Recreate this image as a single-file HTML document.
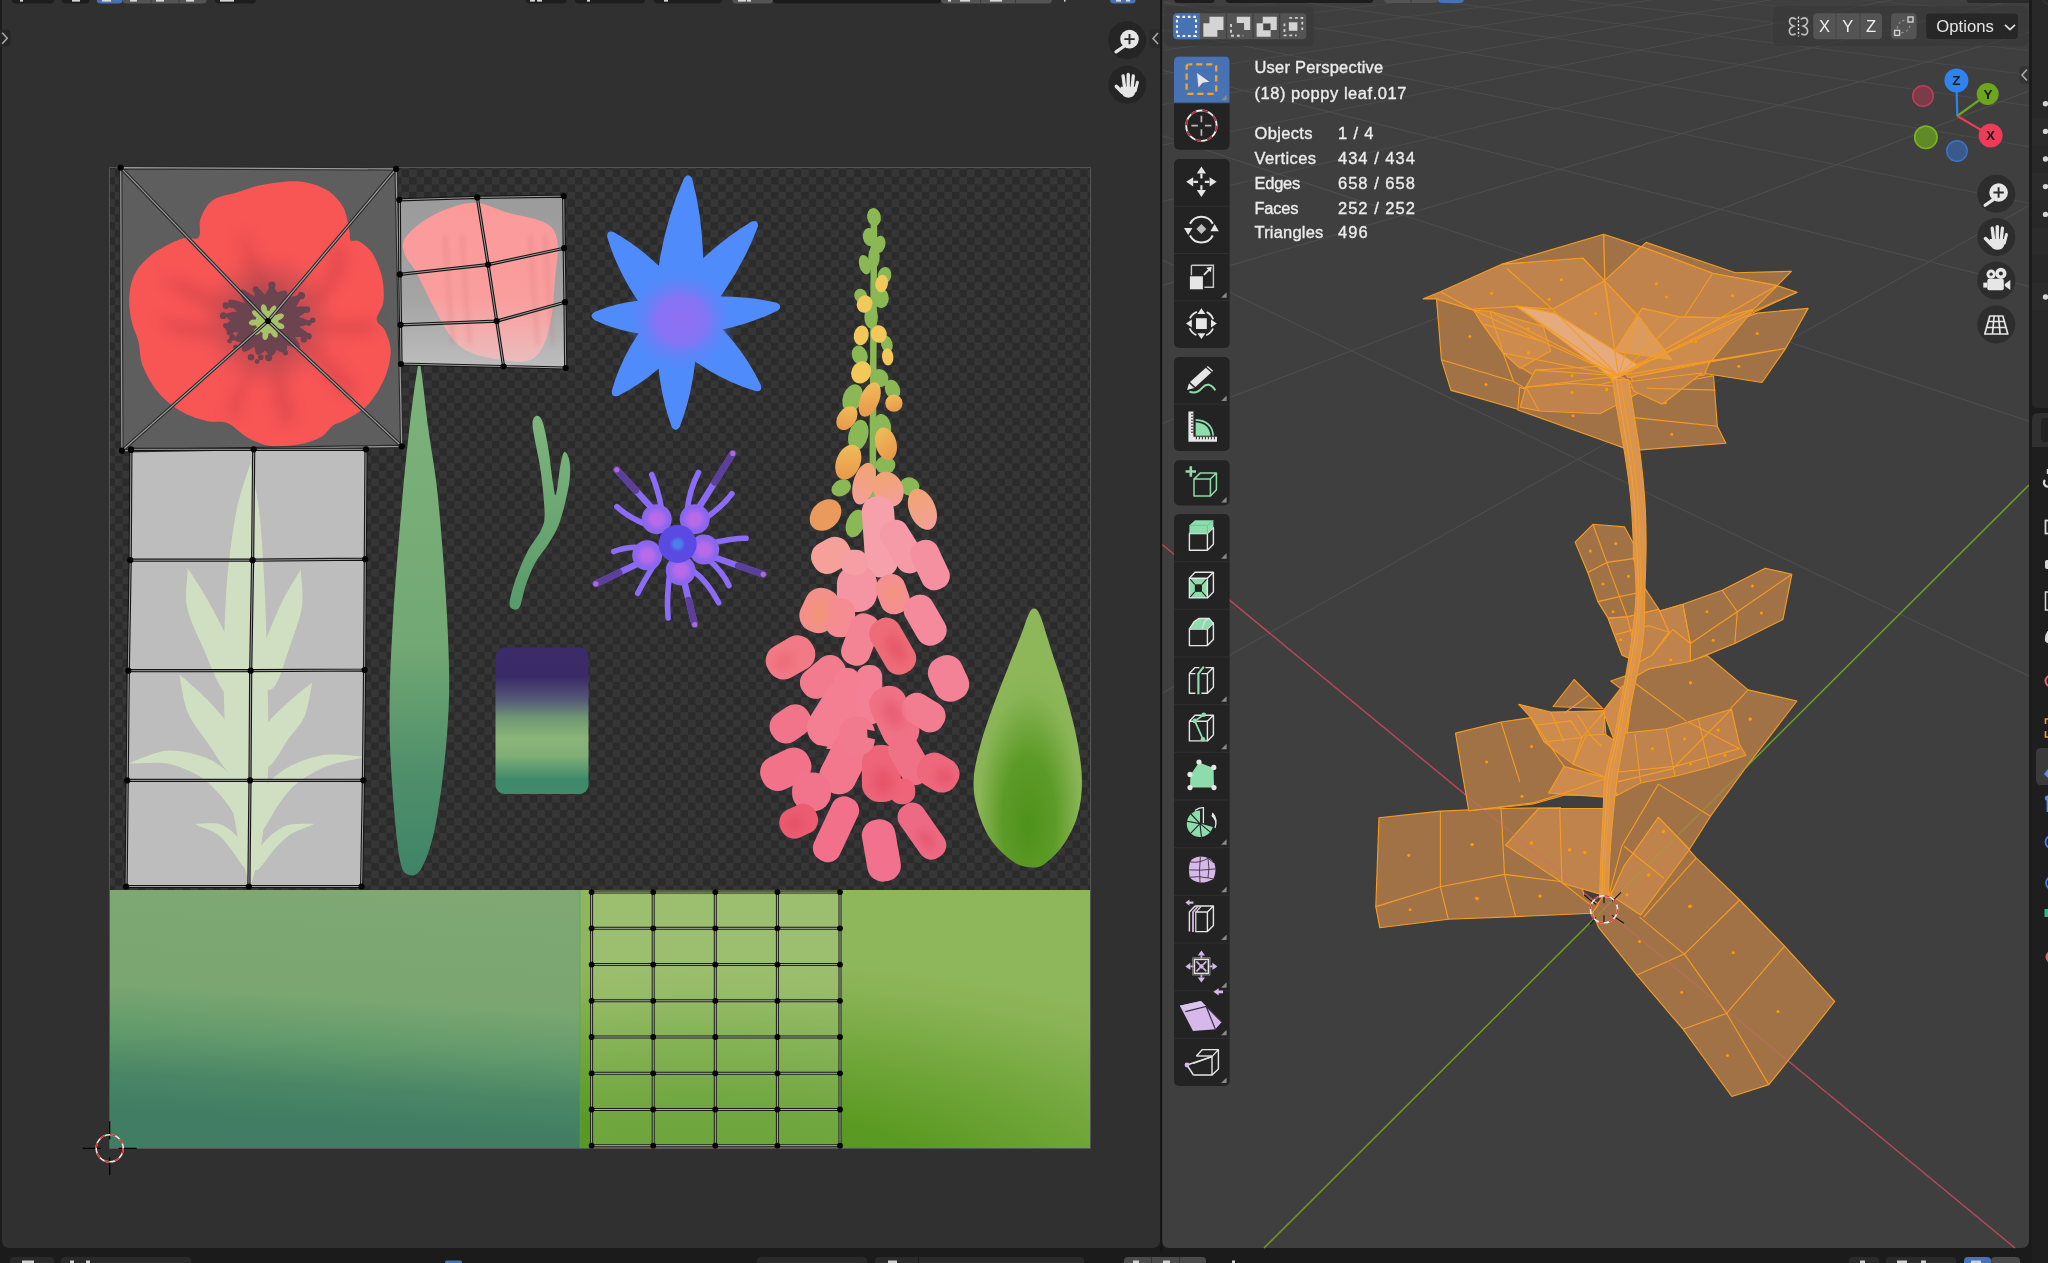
<!DOCTYPE html>
<html><head><meta charset="utf-8"><title>Blender</title>
<style>
html,body{margin:0;padding:0}
body{width:2048px;height:1263px;background:#1b1b1b;overflow:hidden;position:relative;font-family:"Liberation Sans",sans-serif;}
.abs{position:absolute}
#uvbg{left:1.5px;top:0;width:1158.5px;height:1248px;background:#303030;border-radius:0 0 7px 7px}
#vpbg{left:1162px;top:0;width:867px;height:1248px;background:#3f3f3f;border-radius:0 0 7px 7px}
svg{position:absolute;left:0;top:0}
</style></head><body>
<div id="uvbg" class="abs"></div>
<div id="vpbg" class="abs"></div>
<svg width="2048" height="1263" viewBox="0 0 2048 1263">
<defs>
<pattern id="chk" x="115" y="169.3" width="15.08" height="15.08" patternUnits="userSpaceOnUse">
<rect width="15.08" height="15.08" fill="#363636"/><rect width="7.54" height="7.54" fill="#2b2b2b"/><rect x="7.54" y="7.54" width="7.54" height="7.54" fill="#2b2b2b"/></pattern>
<linearGradient id="bandL" x1="0.56" y1="0" x2="0.44" y2="1">
<stop offset="0" stop-color="#7fa873"/><stop offset="0.42" stop-color="#7aa671"/><stop offset="0.6" stop-color="#629a6c"/><stop offset="0.76" stop-color="#4a8666"/><stop offset="0.9" stop-color="#417d63"/><stop offset="1" stop-color="#417d64"/></linearGradient>
<radialGradient id="bandR" gradientUnits="userSpaceOnUse" cx="700" cy="1205" r="670" gradientTransform="translate(0,1205) scale(1,0.367) translate(0,-1205)">
<stop offset="0" stop-color="#54951c"/><stop offset="0.4" stop-color="#5b9a22"/><stop offset="0.7" stop-color="#76a940"/><stop offset="0.92" stop-color="#8bb456"/><stop offset="1" stop-color="#8eb65a"/></radialGradient>
<linearGradient id="gridF" x1="0" y1="0" x2="0" y2="1">
<stop offset="0" stop-color="#9cbf6e"/><stop offset="0.5" stop-color="#8db465"/><stop offset="1" stop-color="#6fa055"/></linearGradient>
<linearGradient id="jar" x1="0" y1="0" x2="0" y2="1">
<stop offset="0" stop-color="#3b2b68"/><stop offset="0.2" stop-color="#3a2a68"/><stop offset="0.36" stop-color="#565a78"/><stop offset="0.48" stop-color="#6f9873"/><stop offset="0.62" stop-color="#8ab578"/><stop offset="0.74" stop-color="#7fae76"/><stop offset="0.9" stop-color="#3f8a6b"/><stop offset="1" stop-color="#418a6c"/></linearGradient>
<linearGradient id="longleaf" x1="0" y1="0" x2="0" y2="1">
<stop offset="0" stop-color="#7db27b"/><stop offset="0.55" stop-color="#72a873"/><stop offset="0.8" stop-color="#4f8f6a"/><stop offset="1" stop-color="#3f8468"/></linearGradient>
<linearGradient id="sprout" x1="0" y1="0" x2="0" y2="1">
<stop offset="0" stop-color="#80b57d"/><stop offset="1" stop-color="#589a6a"/></linearGradient>
<radialGradient id="drop" cx="0.52" cy="0.78" r="0.55" fx="0.5" fy="0.85">
<stop offset="0" stop-color="#4e921a"/><stop offset="0.45" stop-color="#5d9b28"/><stop offset="0.85" stop-color="#8ab556"/><stop offset="1" stop-color="#8db759"/></radialGradient>
<radialGradient id="blueC" cx="0.5" cy="0.5" r="0.5">
<stop offset="0" stop-color="#9070f2"/><stop offset="0.45" stop-color="#8474f4"/><stop offset="1" stop-color="#4f8bfb" stop-opacity="0"/></radialGradient>
<radialGradient id="popC" cx="0.5" cy="0.5" r="0.5">
<stop offset="0" stop-color="#8a4a55" stop-opacity="0.95"/><stop offset="0.35" stop-color="#a04550" stop-opacity="0.8"/><stop offset="0.7" stop-color="#c04a50" stop-opacity="0.45"/><stop offset="1" stop-color="#e05050" stop-opacity="0"/></radialGradient>
<filter id="b1"><feGaussianBlur stdDeviation="1"/></filter>
<filter id="b2"><feGaussianBlur stdDeviation="2.2"/></filter>
<filter id="b4"><feGaussianBlur stdDeviation="4"/></filter>
<filter id="b7"><feGaussianBlur stdDeviation="7"/></filter>
</defs>
<rect x="109.5" y="167.5" width="981" height="981" fill="none" stroke="#565656" stroke-width="1"/>
<rect x="110" y="168" width="980" height="722" fill="url(#chk)"/>
<rect x="110" y="890" width="470" height="258" fill="url(#bandL)"/>
<rect x="580" y="890" width="510" height="258" fill="url(#bandR)"/>
<rect x="579.5" y="890" width="1" height="258" fill="#4f9a8a" opacity="0.6"/>
<path d="M120.7,167.7 L396.1,168.9 L401.7,446.3 L121.9,450.7Z" fill="#5e5e5e"/>
<linearGradient id="petq" x1="0" y1="0" x2="0" y2="1"><stop offset="0" stop-color="#9b9b9b"/><stop offset="0.6" stop-color="#a4a4a4"/><stop offset="1" stop-color="#bdbdbd"/></linearGradient>
<path d="M399.3,199.8 L477.3,197.4 L563.7,196.1 L565.7,368 L503.6,366.5 L401,364Z" fill="url(#petq)"/>
<path d="M130.9,449.3 L366,449.3 L361.6,886.5 L126.1,886.5Z" fill="#bdbdbd"/>
<path d="M298.6,181.4 C309.2,182.1 318.2,185.1 325.6,189.3 C333.0,193.5 338.9,200.0 342.8,206.5 C346.7,213.0 347.7,222.9 349.0,228.5 C350.3,234.1 349.1,238.2 350.7,240.3 C352.3,242.4 355.2,239.2 358.8,241.3 C362.4,243.4 368.4,247.0 372.3,253.1 C376.2,259.1 380.3,269.4 382.1,277.6 C383.9,285.8 384.2,295.2 383.3,302.2 C382.4,309.2 376.4,314.7 376.7,319.4 C377.0,324.1 382.7,325.1 385.0,330.4 C387.3,335.7 390.8,343.3 390.7,351.3 C390.6,359.3 388.5,369.3 384.6,378.3 C380.7,387.3 373.9,398.4 367.4,405.3 C360.8,412.2 351.0,416.6 345.3,420.0 C339.6,423.4 337.1,422.5 333.0,425.4 C328.9,428.3 326.4,434.0 320.7,437.2 C315.0,440.4 307.2,443.2 298.6,444.6 C290.0,446.0 277.8,447.0 269.2,445.8 C260.6,444.6 254.0,441.0 247.1,437.2 C240.2,433.4 234.1,425.7 227.5,423.0 C220.9,420.3 215.2,422.9 207.8,421.2 C200.4,419.5 191.5,417.3 183.3,412.6 C175.1,407.9 165.4,400.8 158.7,393.0 C151.9,385.2 146.2,374.6 142.8,366.0 C139.4,357.4 140.2,348.9 138.4,341.5 C136.6,334.1 133.2,329.2 131.7,321.8 C130.2,314.4 128.7,305.5 129.3,297.3 C129.9,289.1 131.3,280.1 135.4,272.7 C139.5,265.3 146.2,258.7 153.8,253.1 C161.4,247.5 173.4,241.5 180.8,238.9 C188.2,236.3 195.2,240.8 198.5,237.4 C201.8,234.0 198.1,224.9 200.5,218.7 C202.9,212.5 206.6,204.7 212.7,200.3 C218.8,195.9 229.1,194.8 237.3,192.2 C245.5,189.6 251.6,186.7 261.8,184.9 C272.0,183.1 288.0,180.7 298.6,181.4Z" fill="#f85555"/>
<g filter="url(#b7)" opacity="0.4">
<path d="M242.2,231.0 C244.6,230.2 256.1,256.8 261.8,267.8 C267.5,278.9 275.7,290.8 276.5,297.3 C277.3,303.9 271.6,311.2 266.7,307.1 C261.8,303.0 251.2,285.4 247.1,272.7 C243.0,260.0 239.8,231.8 242.2,231.0Z" fill="#c03a42"/>
<path d="M337.9,243.3 C334.6,244.9 330.9,267.8 325.6,277.6 C320.3,287.4 307.2,297.3 306.0,302.2 C304.8,307.1 311.8,312.8 318.3,307.1 C324.9,301.4 342.0,278.4 345.3,267.8 C348.6,257.2 341.2,241.7 337.9,243.3Z" fill="#c03a42"/>
<path d="M163.6,277.6 C164.8,275.2 188.2,282.6 200.5,287.5 C212.8,292.4 232.8,302.2 237.3,307.1 C241.8,312.0 234.9,317.7 227.5,316.9 C220.1,316.1 203.8,308.8 193.1,302.2 C182.4,295.6 162.4,280.1 163.6,277.6Z" fill="#c03a42"/>
<path d="M158.7,319.4 C159.5,316.9 181.6,320.6 193.1,321.8 C204.6,323.0 222.6,324.2 227.5,326.7 C232.4,329.1 229.1,334.9 222.5,336.5 C215.9,338.1 198.8,339.4 188.2,336.5 C177.6,333.6 157.9,321.8 158.7,319.4Z" fill="#c03a42"/>
<path d="M276.5,351.3 C279.0,351.3 283.5,371.8 286.4,383.2 C289.3,394.6 294.5,413.9 293.7,420.0 C292.9,426.1 285.2,426.1 281.5,420.0 C277.8,413.9 272.4,394.6 271.6,383.2 C270.8,371.8 274.0,351.3 276.5,351.3Z" fill="#c03a42"/>
<path d="M261.8,353.7 C261.8,356.1 251.2,375.4 247.1,385.6 C243.0,395.8 240.6,411.0 237.3,415.1 C234.0,419.2 225.9,417.6 227.5,410.2 C229.1,402.8 241.4,380.3 247.1,370.9 C252.8,361.5 261.8,351.2 261.8,353.7Z" fill="#c03a42"/>
<path d="M298.6,341.5 C299.4,345.6 315.0,361.9 323.2,370.9 C331.4,379.9 342.4,393.1 347.7,395.5 C353.0,397.9 360.0,393.8 355.1,385.6 C350.2,377.4 327.7,353.8 318.3,346.4 C308.9,339.0 297.8,337.4 298.6,341.5Z" fill="#c03a42"/>
<path d="M310.9,321.8 C313.8,319.8 337.1,321.8 347.7,321.8 C358.3,321.8 370.6,320.2 374.7,321.8 C378.8,323.4 379.7,329.6 372.3,331.6 C364.9,333.7 340.7,335.7 330.5,334.1 C320.3,332.5 308.0,323.9 310.9,321.8Z" fill="#c03a42"/>
</g>
<circle cx="268" cy="321" r="72" fill="url(#popC)"/>
<path d="M306.4,322.0 C306.5,323.0 295.5,325.0 295.5,326.5 C295.5,328.1 307.0,334.2 306.5,335.1 C306.0,336.1 292.4,333.5 291.4,334.7 C290.3,336.0 298.4,344.9 297.8,345.9 C297.1,346.8 287.3,342.1 285.7,342.6 C284.1,343.2 285.2,349.9 284.1,350.5 C283.0,351.0 277.8,347.3 276.3,347.6 C274.8,348.0 272.6,353.4 271.3,353.5 C270.0,353.6 266.8,348.2 265.2,348.1 C263.7,348.0 259.2,353.2 258.1,352.7 C257.0,352.2 257.3,344.1 255.7,343.7 C254.1,343.4 245.7,349.9 244.3,349.6 C243.0,349.3 245.0,342.4 244.1,341.2 C243.2,339.9 237.1,340.2 236.8,339.0 C236.5,337.8 242.5,332.2 241.5,331.0 C240.4,329.8 228.4,329.7 227.6,328.6 C226.9,327.6 234.8,323.5 234.9,322.0 C234.9,320.5 227.4,316.5 228.1,315.4 C228.7,314.3 240.1,314.2 240.4,312.6 C240.7,311.0 229.7,302.4 230.5,301.6 C231.4,300.8 246.5,307.0 247.8,305.8 C249.2,304.7 241.2,292.5 242.1,291.8 C242.9,291.0 253.3,299.4 255.1,299.3 C257.0,299.1 256.7,291.0 257.9,290.8 C259.1,290.6 263.8,298.0 265.4,297.7 C267.0,297.4 270.2,288.8 271.5,288.4 C272.9,288.1 275.3,294.2 276.8,294.7 C278.4,295.2 283.4,292.0 284.6,292.7 C285.7,293.4 284.9,299.8 286.5,300.4 C288.2,301.0 297.7,296.7 298.4,297.6 C299.2,298.5 292.2,307.0 293.0,308.4 C293.9,309.7 305.4,308.1 305.6,309.2 C305.9,310.2 294.8,316.1 294.9,317.6 C295.0,319.1 306.4,321.0 306.4,322.0Z" fill="#6b4450" stroke="#6b4450" stroke-width="4.5" stroke-linejoin="round"/>
<g fill="#6b4450">
<circle cx="304.0" cy="334.5" r="3.3"/>
<circle cx="232.3" cy="337.4" r="3.1"/>
<circle cx="230.1" cy="332.1" r="3.5"/>
<circle cx="255.7" cy="289.4" r="3.1"/>
<circle cx="223.3" cy="315.7" r="3.4"/>
<circle cx="257.1" cy="361.5" r="2.4"/>
<circle cx="229.6" cy="341.1" r="2.4"/>
<circle cx="231.0" cy="324.3" r="3.3"/>
<circle cx="271.9" cy="285.0" r="3.6"/>
<circle cx="251.0" cy="357.2" r="3.2"/>
<circle cx="231.9" cy="304.6" r="3.5"/>
<circle cx="306.9" cy="309.6" r="3.3"/>
<circle cx="308.4" cy="336.2" r="3.2"/>
<circle cx="312.7" cy="320.3" r="2.7"/>
<circle cx="235.4" cy="347.0" r="2.2"/>
<circle cx="230.8" cy="330.0" r="2.4"/>
<circle cx="309.2" cy="336.1" r="2.4"/>
<circle cx="268.6" cy="357.6" r="3.6"/>
<circle cx="303.9" cy="339.5" r="3.1"/>
<circle cx="301.2" cy="295.7" r="3.6"/>
<circle cx="260.8" cy="357.3" r="2.8"/>
<circle cx="302.4" cy="295.1" r="2.4"/>
<circle cx="285.4" cy="352.7" r="2.6"/>
<circle cx="225.7" cy="325.5" r="2.6"/>
<circle cx="308.8" cy="322.9" r="2.8"/>
<circle cx="226.0" cy="305.6" r="3.3"/>
</g>
<g fill="#a9c268">
<circle cx="267" cy="322" r="11.5"/>
<ellipse cx="279.4" cy="325.8" rx="5.2" ry="3" transform="rotate(17 279.4 325.8)"/>
<ellipse cx="274.0" cy="332.9" rx="5.2" ry="3" transform="rotate(57 274.0 332.9)"/>
<ellipse cx="265.4" cy="334.9" rx="5.2" ry="3" transform="rotate(97 265.4 334.9)"/>
<ellipse cx="257.5" cy="330.8" rx="5.2" ry="3" transform="rotate(137 257.5 330.8)"/>
<ellipse cx="254.0" cy="322.6" rx="5.2" ry="3" transform="rotate(177 254.0 322.6)"/>
<ellipse cx="256.6" cy="314.1" rx="5.2" ry="3" transform="rotate(217 256.6 314.1)"/>
<ellipse cx="264.1" cy="309.3" rx="5.2" ry="3" transform="rotate(257 264.1 309.3)"/>
<ellipse cx="272.9" cy="310.4" rx="5.2" ry="3" transform="rotate(297 272.9 310.4)"/>
<ellipse cx="279.0" cy="317.0" rx="5.2" ry="3" transform="rotate(337 279.0 317.0)"/>
</g>
<linearGradient id="petg" x1="0" y1="0" x2="0" y2="1"><stop offset="0" stop-color="#fc9a9a"/><stop offset="0.6" stop-color="#fa9d9d"/><stop offset="0.85" stop-color="#f2b0b0"/><stop offset="1" stop-color="#e9bcbc"/></linearGradient>
<path d="M406.6,235.9 C411.5,229.6 422.6,220.5 433.6,215.0 C444.7,209.5 460.6,203.2 472.9,202.8 C485.2,202.4 495.0,209.1 507.3,212.6 C519.6,216.1 538.2,218.5 546.6,223.6 C555.0,228.7 556.2,234.3 557.6,243.3 C559.0,252.3 556.1,265.3 555.1,277.6 C554.1,289.9 553.5,305.4 551.5,316.9 C549.5,328.4 547.0,339.0 542.9,346.4 C538.8,353.8 535.3,359.1 526.9,361.1 C518.5,363.1 502.4,360.2 492.6,358.6 C482.8,357.0 475.0,355.0 468.0,351.3 C461.0,347.6 456.5,343.9 450.8,336.5 C445.1,329.1 439.3,317.7 433.6,307.1 C427.9,296.5 421.4,281.7 416.5,272.7 C411.6,263.7 405.8,259.2 404.2,253.1 C402.6,247.0 401.7,242.2 406.6,235.9Z" fill="url(#petg)"/>
<g filter="url(#b2)" opacity="0.35" stroke="#d07878" stroke-width="3" fill="none">
<path d="M445,235 Q448,290 453,345"/>
<path d="M462,235 Q465,290 470,345"/>
<path d="M530,235 Q533,290 538,345"/>
<path d="M545,235 Q548,290 553,345"/>
</g>
<path d="M249.9,464.8 C247.8,471.9 239.6,494.3 236.1,512.4 C232.7,530.6 228.5,560.8 226.7,585.5 C224.8,610.3 223.6,649.7 223.7,677.2 C223.8,704.6 225.2,744.0 227.4,768.6 C229.6,793.2 235.4,824.0 238.6,841.2 C241.9,858.3 247.3,876.6 249.2,882.8 C251.1,889.0 249.5,889.1 251.4,882.8 C253.3,876.5 259.4,858.0 262.0,840.6 C264.5,823.3 267.4,792.0 268.2,767.4 C269.0,742.8 268.0,703.8 267.5,676.6 C266.9,649.4 265.8,610.5 264.5,586.1 C263.3,561.6 261.5,531.5 259.5,513.4 C257.4,495.2 252.1,472.1 250.7,464.8 C249.2,457.5 252.1,457.6 249.9,464.8Z" fill="#d0dfc1"/>
<path d="M187.7,570.7 C187.4,576.3 184.8,596.0 187.2,607.8 C189.7,619.6 198.1,636.8 203.8,649.5 C209.4,662.3 218.7,687.6 225.1,692.7 C231.5,697.7 245.9,691.0 246.3,682.9 C246.7,674.8 233.4,651.1 227.6,638.7 C221.9,626.2 213.5,610.5 207.8,600.2 C202.0,589.9 192.1,574.7 189.1,570.3 C186.1,565.9 188.0,565.1 187.7,570.7Z" fill="#d0dfc1"/>
<path d="M299.5,571.7 C296.7,576.1 287.5,590.7 282.5,601.0 C277.4,611.2 270.4,627.9 266.0,639.9 C261.5,651.8 251.7,673.3 252.8,680.5 C253.9,687.7 267.9,692.7 273.4,687.9 C278.8,683.1 285.0,660.5 289.2,648.3 C293.5,636.2 300.2,618.5 301.9,607.0 C303.7,595.6 301.3,577.4 300.9,572.1 C300.5,566.8 302.3,567.4 299.5,571.7Z" fill="#d0dfc1"/>
<path d="M179.7,676.6 C180.7,682.1 183.5,702.4 187.8,712.4 C192.0,722.4 201.4,733.9 208.0,743.2 C214.5,752.5 225.1,771.7 231.5,774.5 C237.9,777.2 251.0,768.6 250.9,761.5 C250.8,754.4 237.2,736.5 230.6,727.2 C224.1,717.9 214.7,707.3 207.2,699.6 C199.8,691.9 185.1,679.3 180.9,675.8 C176.8,672.4 178.6,671.1 179.7,676.6Z" fill="#d0dfc1"/>
<path d="M310.6,683.8 C306.8,686.6 293.5,697.4 287.0,703.4 C280.4,709.4 272.5,716.1 266.9,723.9 C261.4,731.6 249.9,748.5 250.1,754.9 C250.4,761.3 263.0,768.9 268.7,766.5 C274.4,764.1 282.8,746.7 288.3,739.1 C293.7,731.6 301.3,724.2 304.8,716.0 C308.3,707.8 311.0,689.4 311.8,684.6 C312.7,679.7 314.3,681.0 310.6,683.8Z" fill="#d0dfc1"/>
<path d="M132.0,763.6 C137.4,763.8 157.6,761.7 167.8,763.6 C178.1,765.6 192.1,771.7 200.2,776.7 C208.3,781.7 215.7,790.1 222.1,797.2 C228.6,804.3 237.8,821.4 243.1,824.0 C248.4,826.5 258.2,820.2 257.5,814.0 C256.8,807.8 245.7,790.8 238.5,782.6 C231.2,774.4 219.9,764.1 209.4,759.3 C198.9,754.5 180.4,750.1 168.8,750.6 C157.1,751.0 137.3,760.2 131.8,762.2 C126.3,764.1 126.6,763.4 132.0,763.6Z" fill="#d0dfc1"/>
<path d="M361.4,756.4 C355.7,756.0 334.7,753.4 323.5,755.1 C312.4,756.8 296.4,762.4 287.2,767.7 C277.9,773.0 267.7,782.4 261.5,790.5 C255.4,798.7 246.3,816.0 246.4,822.0 C246.4,828.0 256.7,833.3 261.6,830.6 C266.5,827.8 273.7,810.8 279.1,803.7 C284.4,796.5 290.1,788.5 297.2,782.9 C304.4,777.3 316.8,770.1 326.5,766.3 C336.1,762.6 356.3,759.3 361.6,757.8 C366.8,756.3 367.1,756.8 361.4,756.4Z" fill="#d0dfc1"/>
<path d="M197.3,825.2 C200.2,826.7 211.9,830.2 216.9,833.7 C221.9,837.2 226.3,843.4 230.7,848.7 C235.0,854.0 242.5,867.0 246.1,869.2 C249.6,871.5 255.3,867.9 254.5,863.6 C253.7,859.2 245.7,846.1 240.7,840.3 C235.8,834.5 228.1,827.2 221.7,824.7 C215.2,822.2 201.3,823.7 197.7,823.8 C194.0,823.9 194.5,823.7 197.3,825.2Z" fill="#d0dfc1"/>
<path d="M311.0,823.8 C307.3,823.9 293.3,823.2 286.5,825.6 C279.7,828.1 271.3,834.6 265.8,840.2 C260.3,845.9 251.1,859.0 249.9,863.4 C248.8,867.7 254.4,871.6 258.1,869.4 C261.8,867.3 269.9,854.1 274.8,848.8 C279.7,843.5 285.2,837.7 290.7,834.2 C296.2,830.6 308.3,826.8 311.4,825.2 C314.4,823.7 314.8,823.7 311.0,823.8Z" fill="#d0dfc1"/>
<path d="M420.4,366.0 C422.4,375.3 425.8,410.0 428.5,430.0 C431.2,450.0 434.2,464.1 436.7,485.8 C439.2,507.5 441.5,535.4 443.4,560.2 C445.3,585.0 447.0,611.7 447.9,634.6 C448.8,657.5 449.6,676.2 449.0,697.9 C448.4,719.6 446.7,742.5 444.2,764.8 C441.7,787.1 438.0,814.4 434.1,831.8 C430.2,849.2 425.4,861.9 421.1,869.0 C416.8,876.1 411.7,876.5 408.1,874.6 C404.5,872.7 402.2,873.0 399.5,857.8 C396.8,842.6 393.8,808.2 392.1,783.4 C390.4,758.6 389.3,736.9 389.5,709.0 C389.7,681.1 391.1,650.1 393.2,616.0 C395.2,581.9 399.1,535.4 401.8,504.4 C404.5,473.4 406.7,451.7 409.2,430.0 C411.7,408.3 414.7,384.9 416.6,374.2 C418.5,363.5 418.4,356.7 420.4,366.0Z" fill="url(#longleaf)"/>
<rect x="495.5" y="647.5" width="93" height="146.5" rx="9" fill="url(#jar)"/>
<path d="M537.0,415.8 C538.7,415.8 540.8,416.8 542.7,422.3 C544.6,427.8 546.7,438.8 548.4,448.9 C550.1,459.0 551.7,475.5 553.0,483.1 C554.3,490.7 554.7,497.7 556.0,494.5 C557.3,491.3 559.2,471.2 560.6,464.1 C562.0,457.0 563.0,452.5 564.4,451.9 C565.8,451.3 568.4,455.7 569.3,460.3 C570.2,464.9 570.5,471.7 569.7,479.3 C568.9,486.9 566.4,498.0 564.4,505.9 C562.4,513.8 560.6,520.5 557.9,526.8 C555.2,533.1 552.2,537.9 548.4,543.9 C544.6,549.9 538.9,555.9 535.1,562.9 C531.3,569.9 528.1,578.4 525.6,585.7 C523.1,593.0 521.9,602.7 519.9,606.6 C517.9,610.5 515.1,609.9 513.4,609.3 C511.7,608.7 509.2,608.0 509.6,602.8 C510.1,597.6 513.1,586.6 516.1,578.1 C519.1,569.6 523.4,559.4 527.5,551.5 C531.6,543.6 537.9,536.9 540.8,530.6 C543.6,524.3 544.6,523.3 544.6,513.5 C544.6,503.7 542.4,483.7 540.8,471.7 C539.2,459.7 536.5,449.5 535.1,441.3 C533.7,433.1 532.2,426.6 532.5,422.3 C532.8,418.1 535.3,415.8 537.0,415.8Z" fill="url(#sprout)"/>
<path d="M700.3,319.8 Q709.1,241.5 692.1,178.5 Q688.5,172.2 684.1,177.9 Q657.3,237.4 653.7,316.2Z M693.0,331.2 Q738.6,279.6 757.9,226.5 Q758.6,219.3 751.7,221.4 Q703.1,250.3 661.0,304.8Z M679.0,335.9 Q736.1,331.4 777.8,310.6 Q783.3,306.0 776.9,302.7 Q731.6,291.7 675.0,300.1Z M662.3,335.0 Q706.6,376.5 755.6,391.1 Q762.8,392.0 760.8,385.0 Q739.3,338.7 691.7,301.0Z M657.2,317.8 Q654.3,379.3 671.7,426.9 Q675.7,432.9 679.7,426.9 Q698.3,379.8 696.8,318.2Z M661.0,304.8 Q624.0,346.1 611.8,390.8 Q611.1,398.0 618.0,395.9 Q659.6,375.4 693.0,331.2Z M677.5,300.0 Q630.4,296.8 594.5,311.9 Q588.4,315.7 594.3,319.9 Q629.4,336.8 676.5,336.0Z M693.2,305.1 Q657.3,256.5 613.5,232.0 Q606.6,229.9 607.2,237.0 Q621.4,285.2 660.8,330.9Z " fill="#508bfb"/>
<circle cx="677" cy="318" r="37" fill="#508bfb"/>
<ellipse cx="681" cy="320" rx="56" ry="52" fill="url(#blueC)"/>
<g stroke-linecap="round" fill="none">
<path d="M692.8,517.3 L732.8,453.4" stroke="#8a6af5" stroke-width="6.5"/>
<path d="M714.8,482.2 L732.8,453.4" stroke="#5b3f9a" stroke-width="7"/>
<circle cx="732.8" cy="453.4" r="2.6" fill="#b06ad8" stroke="none"/>
<path d="M658.6,515.4 L616.8,469.8" stroke="#8a6af5" stroke-width="6.5"/>
<path d="M635.6,490.3 L616.8,469.8" stroke="#5b3f9a" stroke-width="7"/>
<circle cx="616.8" cy="469.8" r="2.6" fill="#b06ad8" stroke="none"/>
<path d="M708.1,555.3 L763.2,574.3" stroke="#8a6af5" stroke-width="6.5"/>
<path d="M738.4,565.8 L763.2,574.3" stroke="#5b3f9a" stroke-width="7"/>
<circle cx="763.2" cy="574.3" r="2.6" fill="#b06ad8" stroke="none"/>
<path d="M647.2,559.1 L595.9,583.8" stroke="#8a6af5" stroke-width="6.5"/>
<path d="M619.0,572.7 L595.9,583.8" stroke="#5b3f9a" stroke-width="7"/>
<circle cx="595.9" cy="583.8" r="2.6" fill="#b06ad8" stroke="none"/>
<path d="M681.4,570.5 L694.7,624.5" stroke="#8a6af5" stroke-width="6.5"/>
<path d="M688.7,600.2 L694.7,624.5" stroke="#5b3f9a" stroke-width="7"/>
<circle cx="694.7" cy="624.5" r="2.6" fill="#b06ad8" stroke="none"/>
<path d="M662.4,513.5 Q658.6,490.7 651.8,474.7" stroke="#8b6cf6" stroke-width="5.6"/>
<path d="M687.1,511.6 Q689.0,490.7 698.5,472.4" stroke="#8b6cf6" stroke-width="5.6"/>
<path d="M704.2,519.2 Q723.3,505.9 732.0,493.7" stroke="#8b6cf6" stroke-width="5.6"/>
<path d="M647.2,524.9 Q628.2,517.3 616.8,506.6" stroke="#8b6cf6" stroke-width="5.6"/>
<path d="M708.1,543.9 Q730.9,538.2 746.1,538.2" stroke="#8b6cf6" stroke-width="5.6"/>
<path d="M708.1,559.1 Q723.3,572.4 729.0,585.7" stroke="#8b6cf6" stroke-width="5.6"/>
<path d="M647.2,547.7 Q628.2,545.8 613.8,551.5" stroke="#8b6cf6" stroke-width="5.6"/>
<path d="M652.9,566.7 Q643.4,581.9 637.7,593.3" stroke="#8b6cf6" stroke-width="5.6"/>
<path d="M670.0,572.4 Q666.2,597.1 668.1,618.0" stroke="#8b6cf6" stroke-width="5.6"/>
<path d="M692.8,570.5 Q708.1,581.9 718.7,602.8" stroke="#8b6cf6" stroke-width="5.6"/>
</g>
<circle cx="656.7" cy="519.2" r="15" fill="#8a66ee"/>
<circle cx="656.7" cy="519.2" r="9" fill="#b86ae8" filter="url(#b2)"/>
<circle cx="694.7" cy="519.2" r="15" fill="#8a66ee"/>
<circle cx="694.7" cy="519.2" r="9" fill="#b86ae8" filter="url(#b2)"/>
<circle cx="704.2" cy="549.6" r="15" fill="#8a66ee"/>
<circle cx="704.2" cy="549.6" r="9" fill="#b86ae8" filter="url(#b2)"/>
<circle cx="647.2" cy="555.3" r="15" fill="#8a66ee"/>
<circle cx="647.2" cy="555.3" r="9" fill="#b86ae8" filter="url(#b2)"/>
<circle cx="680.7" cy="570.5" r="15" fill="#8a66ee"/>
<circle cx="680.7" cy="570.5" r="9" fill="#b86ae8" filter="url(#b2)"/>
<circle cx="677.6" cy="543.9" r="19" fill="#5a4ae2"/>
<circle cx="677.6" cy="543.9" r="6" fill="#4a7fe8" filter="url(#b1)"/>
<path d="M874.0,218.5 L872.6,503.6" stroke="#8ab855" stroke-width="6.5" stroke-linecap="round"/>
<ellipse cx="874.0" cy="217.1" rx="6.8" ry="9.1" fill="#8ab855" transform="rotate(-10 874.0 217.1)" />
<ellipse cx="869.7" cy="237.0" rx="6.8" ry="9.1" fill="#8ab855" transform="rotate(-10 869.7 237.0)" />
<ellipse cx="879.7" cy="244.2" rx="5.7" ry="8.6" fill="#8ab855" transform="rotate(10 879.7 244.2)" />
<ellipse cx="874.0" cy="257.0" rx="5.7" ry="11.4" fill="#8ab855" transform="rotate(0 874.0 257.0)" />
<ellipse cx="864.9" cy="264.7" rx="5.7" ry="10.0" fill="#8ab855" transform="rotate(-15 864.9 264.7)" />
<ellipse cx="884.5" cy="275.5" rx="6.8" ry="8.6" fill="#8ab855" transform="rotate(10 884.5 275.5)" />
<ellipse cx="860.6" cy="295.5" rx="6.3" ry="6.8" fill="#8ab855" transform="rotate(-30 860.6 295.5)" />
<ellipse cx="881.1" cy="298.3" rx="7.7" ry="10.0" fill="#8ab855" transform="rotate(0 881.1 298.3)" />
<ellipse cx="871.1" cy="316.9" rx="6.8" ry="11.4" fill="#8ab855" transform="rotate(0 871.1 316.9)" />
<ellipse cx="859.7" cy="355.3" rx="7.7" ry="10.0" fill="#8ab855" transform="rotate(-20 859.7 355.3)" />
<ellipse cx="886.8" cy="343.9" rx="5.7" ry="8.6" fill="#8ab855" transform="rotate(-15 886.8 343.9)" />
<ellipse cx="879.7" cy="378.1" rx="8.6" ry="9.1" fill="#8ab855" transform="rotate(-30 879.7 378.1)" />
<ellipse cx="892.5" cy="389.5" rx="7.4" ry="10.0" fill="#8ab855" transform="rotate(-20 892.5 389.5)" />
<ellipse cx="852.6" cy="398.1" rx="9.7" ry="14.3" fill="#8ab855" transform="rotate(20 852.6 398.1)" />
<ellipse cx="882.5" cy="426.6" rx="8.6" ry="12.8" fill="#8ab855" transform="rotate(-10 882.5 426.6)" />
<ellipse cx="858.3" cy="435.2" rx="9.7" ry="15.7" fill="#8ab855" transform="rotate(15 858.3 435.2)" />
<ellipse cx="885.4" cy="465.1" rx="10.0" ry="9.1" fill="#8ab855" transform="rotate(0 885.4 465.1)" />
<ellipse cx="841.2" cy="487.9" rx="10.3" ry="8.0" fill="#8ab855" transform="rotate(-30 841.2 487.9)" />
<ellipse cx="909.6" cy="486.5" rx="10.0" ry="9.1" fill="#8ab855" transform="rotate(20 909.6 486.5)" />
<ellipse cx="855.5" cy="523.5" rx="9.1" ry="14.3" fill="#8ab855" transform="rotate(20 855.5 523.5)" />
<ellipse cx="881.7" cy="283.5" rx="6.3" ry="8.8" fill="#f2c85b" transform="rotate(10 881.7 283.5)" />
<ellipse cx="864.6" cy="304.0" rx="7.7" ry="8.8" fill="#f2c85b" transform="rotate(20 864.6 304.0)" />
<ellipse cx="861.2" cy="335.4" rx="7.4" ry="10.0" fill="#f2c85b" transform="rotate(10 861.2 335.4)" />
<ellipse cx="878.8" cy="334.0" rx="8.0" ry="8.8" fill="#f2c85b" transform="rotate(-10 878.8 334.0)" />
<ellipse cx="887.7" cy="356.8" rx="5.7" ry="8.6" fill="#f2c85b" transform="rotate(-5 887.7 356.8)" />
<ellipse cx="861.2" cy="372.4" rx="9.7" ry="11.4" fill="#f2c85b" transform="rotate(25 861.2 372.4)" />
<linearGradient id="og" x1="0" y1="0" x2="0.3" y2="1"><stop offset="0" stop-color="#f0c05c"/><stop offset="1" stop-color="#e99a4c"/></linearGradient>
<ellipse cx="869.7" cy="399.5" rx="9.4" ry="18.2" fill="url(#og)" transform="rotate(22 869.7 399.5)" />
<ellipse cx="846.9" cy="418.1" rx="9.1" ry="13.1" fill="url(#og)" transform="rotate(35 846.9 418.1)" />
<ellipse cx="893.9" cy="403.2" rx="8.6" ry="8.6" fill="url(#og)" transform="rotate(0 893.9 403.2)" />
<ellipse cx="886.0" cy="443.7" rx="10.5" ry="16.5" fill="url(#og)" transform="rotate(-15 886.0 443.7)" />
<ellipse cx="848.3" cy="462.2" rx="12.0" ry="18.2" fill="url(#og)" transform="rotate(22 848.3 462.2)" />
<ellipse cx="825.5" cy="515.0" rx="13.7" ry="17.7" fill="#ea9a5c" transform="rotate(45 825.5 515.0)" />
<linearGradient id="pg" x1="0" y1="0" x2="0" y2="1"><stop offset="0" stop-color="#f0a472"/><stop offset="1" stop-color="#f4a096"/></linearGradient>
<ellipse cx="864.0" cy="483.6" rx="10.8" ry="21.4" fill="url(#pg)" transform="rotate(15 864.0 483.6)" />
<ellipse cx="888.2" cy="489.3" rx="14.8" ry="18.2" fill="url(#pg)" transform="rotate(-25 888.2 489.3)" />
<ellipse cx="922.4" cy="509.3" rx="13.1" ry="21.4" fill="url(#pg)" transform="rotate(-22 922.4 509.3)" />
<ellipse cx="879.7" cy="520.7" rx="11.4" ry="20.0" fill="#f6a3ac" transform="rotate(0 879.7 520.7)" />
<rect x="863.5" y="496.3" width="32.4" height="81.1" rx="14.9" fill="#f5a0aa" transform="rotate(-4 879.7 536.8)"/>
<rect x="811.0" y="539.1" width="40.2" height="32.4" rx="14.9" fill="#f5a098" transform="rotate(-30 831.1 555.3)"/>
<rect x="887.8" y="518.0" width="29.2" height="57.1" rx="13.4" fill="#f59aa6" transform="rotate(-32 902.4 546.5)"/>
<rect x="915.4" y="539.1" width="29.2" height="51.9" rx="13.4" fill="#f590a0" transform="rotate(-25 930.0 565.0)"/>
<rect x="836.9" y="565.3" width="40.2" height="46.7" rx="18.5" fill="#f594a2" transform="rotate(0 857.0 588.7)"/>
<rect x="877.8" y="574.1" width="29.8" height="40.2" rx="13.7" fill="#f59090" transform="rotate(-20 892.7 594.2)"/>
<rect x="801.9" y="587.7" width="35.7" height="45.4" rx="16.4" fill="#f4908a" transform="rotate(25 819.7 610.4)"/>
<rect x="825.3" y="598.4" width="29.8" height="38.9" rx="13.7" fill="#f58c92" transform="rotate(0 840.2 617.9)"/>
<rect x="909.6" y="593.5" width="31.1" height="53.2" rx="14.3" fill="#f58a9c" transform="rotate(-30 925.2 620.1)"/>
<rect x="765.2" y="639.6" width="50.6" height="35.7" rx="16.4" fill="#f27a86" transform="rotate(-30 790.5 657.4)"/>
<rect x="798.3" y="661.3" width="49.3" height="31.1" rx="14.3" fill="#f27c8e" transform="rotate(-40 823.0 676.9)"/>
<rect x="845.4" y="613.0" width="29.8" height="53.2" rx="13.7" fill="#f28494" transform="rotate(20 860.3 639.6)"/>
<rect x="876.5" y="616.3" width="32.4" height="59.7" rx="14.9" fill="#ee6c78" transform="rotate(-30 892.7 646.1)"/>
<rect x="930.7" y="655.1" width="35.7" height="46.7" rx="16.4" fill="#f38296" transform="rotate(-25 948.5 678.5)"/>
<rect x="769.1" y="707.7" width="42.8" height="32.4" rx="14.9" fill="#f2748a" transform="rotate(-35 790.5 723.9)"/>
<rect x="815.5" y="677.9" width="42.8" height="72.7" rx="19.7" fill="#f47e92" transform="rotate(32 836.9 714.2)"/>
<rect x="856.4" y="664.9" width="25.9" height="59.7" rx="11.9" fill="#f48096" transform="rotate(0 869.4 694.7)"/>
<rect x="875.5" y="685.0" width="37.6" height="64.9" rx="17.3" fill="#f07284" transform="rotate(-25 894.3 717.4)"/>
<rect x="900.8" y="697.0" width="45.4" height="31.1" rx="14.3" fill="#f27c90" transform="rotate(32 923.5 712.6)"/>
<rect x="759.8" y="751.5" width="51.9" height="35.7" rx="16.4" fill="#f2728a" transform="rotate(-25 785.7 769.3)"/>
<rect x="825.9" y="730.4" width="37.6" height="64.9" rx="17.3" fill="#f3788e" transform="rotate(27 844.7 762.8)"/>
<rect x="861.9" y="745.0" width="38.9" height="57.1" rx="17.9" fill="#ee6478" transform="rotate(0 881.4 773.5)"/>
<rect x="894.0" y="733.0" width="31.1" height="53.2" rx="14.3" fill="#f07086" transform="rotate(-30 909.6 759.6)"/>
<rect x="916.7" y="755.1" width="42.8" height="35.0" rx="16.1" fill="#ee687c" transform="rotate(30 938.1 772.6)"/>
<rect x="792.1" y="772.5" width="38.9" height="38.9" rx="17.9" fill="#f2748c" transform="rotate(0 811.6 792.0)"/>
<rect x="779.2" y="806.0" width="38.9" height="30.5" rx="14.0" fill="#ec5c72" transform="rotate(-25 798.7 821.2)"/>
<rect x="821.7" y="794.9" width="28.5" height="68.8" rx="13.1" fill="#f2708a" transform="rotate(25 836.0 829.3)"/>
<rect x="864.5" y="819.3" width="33.7" height="62.3" rx="15.5" fill="#f2728e" transform="rotate(-10 881.4 850.4)"/>
<rect x="907.6" y="799.9" width="28.5" height="62.3" rx="13.1" fill="#ee6a84" transform="rotate(-35 921.9 831.0)"/>
<rect x="839.2" y="716.7" width="35.7" height="38.9" rx="16.4" fill="#f27a8e" transform="rotate(0 857.0 736.2)"/>
<rect x="840.8" y="549.7" width="27.2" height="25.9" rx="11.9" fill="#f59ea4" transform="rotate(0 854.4 562.7)"/>
<rect x="834.3" y="668.1" width="25.9" height="25.9" rx="11.9" fill="#f47e92" transform="rotate(0 847.3 681.1)"/>
<rect x="889.4" y="778.4" width="25.9" height="25.9" rx="11.9" fill="#ee6478" transform="rotate(0 902.4 791.4)"/>
<g filter="url(#b4)" opacity="0.5">
<ellipse cx="896.0" cy="648.7" rx="8.4" ry="16.2" fill="#e04860" transform="rotate(-30 896.0 648.7)" />
<ellipse cx="883.0" cy="781.7" rx="10.4" ry="13.0" fill="#e04860" transform="rotate(0 883.0 781.7)" />
<ellipse cx="892.7" cy="713.5" rx="9.7" ry="14.6" fill="#e2506a" transform="rotate(-25 892.7 713.5)" />
<ellipse cx="793.8" cy="823.8" rx="9.7" ry="7.8" fill="#e04860" transform="rotate(-25 793.8 823.8)" />
<ellipse cx="944.6" cy="776.8" rx="9.7" ry="8.4" fill="#e04860" transform="rotate(30 944.6 776.8)" />
<ellipse cx="926.8" cy="840.0" rx="6.5" ry="13.0" fill="#e04860" transform="rotate(-35 926.8 840.0)" />
<ellipse cx="819.7" cy="613.0" rx="9.7" ry="11.4" fill="#f09a6a" transform="rotate(25 819.7 613.0)" />
<ellipse cx="892.7" cy="593.5" rx="7.8" ry="9.7" fill="#f09a70" transform="rotate(-20 892.7 593.5)" />
<ellipse cx="784.1" cy="661.6" rx="11.0" ry="8.4" fill="#e8606a" transform="rotate(-30 784.1 661.6)" />
</g>
<path d="M867.1,729.6 L876.6,731.6 L875.6,739.6 L867.6,737.6Z" fill="#303030"/>
<path d="M816.7,744.8 L827.7,746.8 L814.7,760.8Z" fill="#303030"/>
<path d="M1034.5,608.6 C1036.5,609.1 1037.9,610.0 1040.8,617.2 C1043.7,624.4 1047.7,638.8 1051.9,652.0 C1056.1,665.2 1062.0,681.5 1066.2,696.3 C1070.4,711.1 1074.6,726.5 1077.2,740.7 C1079.8,755.0 1082.0,769.1 1082.0,781.8 C1082.0,794.5 1080.4,806.1 1077.2,816.7 C1074.0,827.3 1068.5,837.3 1063.0,845.2 C1057.5,853.1 1049.5,860.5 1044.0,864.2 C1038.5,867.9 1035.0,867.8 1029.7,867.3 C1024.4,866.8 1018.9,865.8 1012.3,861.0 C1005.7,856.2 996.1,847.8 990.2,838.8 C984.3,829.8 979.6,817.2 976.9,807.2 C974.1,797.2 973.1,789.3 973.7,778.7 C974.3,768.1 977.4,755.9 980.7,743.8 C984.0,731.6 988.5,719.0 993.3,705.8 C998.0,692.6 1004.5,676.8 1009.2,664.7 C1014.0,652.6 1018.5,641.5 1021.8,633.0 C1025.1,624.5 1026.7,618.1 1028.8,614.0 C1030.9,609.9 1032.5,608.1 1034.5,608.6Z" fill="url(#drop)"/>
<path d="M120.7,167.7 L396.1,168.9 M396.1,168.9 L401.7,446.3 M401.7,446.3 L121.9,450.7 M121.9,450.7 L120.7,167.7 M120.7,167.7 L268.0,321.0 M396.1,168.9 L268.0,321.0 M401.7,446.3 L268.0,321.0 M121.9,450.7 L268.0,321.0" stroke="#2a2a2a" stroke-width="3.4" fill="none" stroke-linecap="round"/>
<path d="M120.7,167.7 L396.1,168.9 M396.1,168.9 L401.7,446.3 M401.7,446.3 L121.9,450.7 M121.9,450.7 L120.7,167.7 M120.7,167.7 L268.0,321.0 M396.1,168.9 L268.0,321.0 M401.7,446.3 L268.0,321.0 M121.9,450.7 L268.0,321.0" stroke="#9c9c9c" stroke-width="1.2" fill="none"/>
<circle cx="120.7" cy="167.7" r="3.1" fill="#050505"/>
<circle cx="396.1" cy="168.9" r="3.1" fill="#050505"/>
<circle cx="401.7" cy="446.3" r="3.1" fill="#050505"/>
<circle cx="121.9" cy="450.7" r="3.1" fill="#050505"/>
<circle cx="268.0" cy="321.0" r="3.1" fill="#050505"/>
<path d="M399.3,199.8 L477.3,197.4 M477.3,197.4 L563.7,196.1 M399.8,274.4 L488.1,264.6 M488.1,264.6 L564.2,248.2 M400.5,324.8 L496.7,321.1 M496.7,321.1 L565.0,302.2 M401.0,364.0 L503.6,366.5 M503.6,366.5 L565.7,368.0 M399.3,199.8 L399.8,274.4 M477.3,197.4 L488.1,264.6 M563.7,196.1 L564.2,248.2 M399.8,274.4 L400.5,324.8 M488.1,264.6 L496.7,321.1 M564.2,248.2 L565.0,302.2 M400.5,324.8 L401.0,364.0 M496.7,321.1 L503.6,366.5 M565.0,302.2 L565.7,368.0" stroke="#141414" stroke-width="3.2" fill="none" stroke-linecap="round"/>
<path d="M399.3,199.8 L477.3,197.4 M477.3,197.4 L563.7,196.1 M399.8,274.4 L488.1,264.6 M488.1,264.6 L564.2,248.2 M400.5,324.8 L496.7,321.1 M496.7,321.1 L565.0,302.2 M401.0,364.0 L503.6,366.5 M503.6,366.5 L565.7,368.0 M399.3,199.8 L399.8,274.4 M477.3,197.4 L488.1,264.6 M563.7,196.1 L564.2,248.2 M399.8,274.4 L400.5,324.8 M488.1,264.6 L496.7,321.1 M564.2,248.2 L565.0,302.2 M400.5,324.8 L401.0,364.0 M496.7,321.1 L503.6,366.5 M565.0,302.2 L565.7,368.0" stroke="#b0b0b0" stroke-width="0.9" fill="none"/>
<circle cx="399.3" cy="199.8" r="3.1" fill="#050505"/>
<circle cx="477.3" cy="197.4" r="3.1" fill="#050505"/>
<circle cx="563.7" cy="196.1" r="3.1" fill="#050505"/>
<circle cx="399.8" cy="274.4" r="3.1" fill="#050505"/>
<circle cx="488.1" cy="264.6" r="3.1" fill="#050505"/>
<circle cx="564.2" cy="248.2" r="3.1" fill="#050505"/>
<circle cx="400.5" cy="324.8" r="3.1" fill="#050505"/>
<circle cx="496.7" cy="321.1" r="3.1" fill="#050505"/>
<circle cx="565.0" cy="302.2" r="3.1" fill="#050505"/>
<circle cx="401.0" cy="364.0" r="3.1" fill="#050505"/>
<circle cx="503.6" cy="366.5" r="3.1" fill="#050505"/>
<circle cx="565.7" cy="368.0" r="3.1" fill="#050505"/>
<path d="M130.9,449.3 L253.7,449.3 M253.7,449.3 L366.0,449.3 M130.2,560.2 L252.6,560.2 M252.6,560.2 L365.3,559.2 M128.3,670.7 L250.7,670.7 M250.7,670.7 L364.6,670.0 M127.2,780.4 L250.0,780.4 M250.0,780.4 L363.4,780.3 M126.1,886.5 L248.9,886.5 M248.9,886.5 L361.6,886.5 M130.9,449.3 L130.2,560.2 M253.7,449.3 L252.6,560.2 M366.0,449.3 L365.3,559.2 M130.2,560.2 L128.3,670.7 M252.6,560.2 L250.7,670.7 M365.3,559.2 L364.6,670.0 M128.3,670.7 L127.2,780.4 M250.7,670.7 L250.0,780.4 M364.6,670.0 L363.4,780.3 M127.2,780.4 L126.1,886.5 M250.0,780.4 L248.9,886.5 M363.4,780.3 L361.6,886.5" stroke="#141414" stroke-width="3.2" fill="none" stroke-linecap="round"/>
<path d="M130.9,449.3 L253.7,449.3 M253.7,449.3 L366.0,449.3 M130.2,560.2 L252.6,560.2 M252.6,560.2 L365.3,559.2 M128.3,670.7 L250.7,670.7 M250.7,670.7 L364.6,670.0 M127.2,780.4 L250.0,780.4 M250.0,780.4 L363.4,780.3 M126.1,886.5 L248.9,886.5 M248.9,886.5 L361.6,886.5 M130.9,449.3 L130.2,560.2 M253.7,449.3 L252.6,560.2 M366.0,449.3 L365.3,559.2 M130.2,560.2 L128.3,670.7 M252.6,560.2 L250.7,670.7 M365.3,559.2 L364.6,670.0 M128.3,670.7 L127.2,780.4 M250.7,670.7 L250.0,780.4 M364.6,670.0 L363.4,780.3 M127.2,780.4 L126.1,886.5 M250.0,780.4 L248.9,886.5 M363.4,780.3 L361.6,886.5" stroke="#b0b0b0" stroke-width="0.9" fill="none"/>
<circle cx="130.9" cy="449.3" r="3.1" fill="#050505"/>
<circle cx="253.7" cy="449.3" r="3.1" fill="#050505"/>
<circle cx="366.0" cy="449.3" r="3.1" fill="#050505"/>
<circle cx="130.2" cy="560.2" r="3.1" fill="#050505"/>
<circle cx="252.6" cy="560.2" r="3.1" fill="#050505"/>
<circle cx="365.3" cy="559.2" r="3.1" fill="#050505"/>
<circle cx="128.3" cy="670.7" r="3.1" fill="#050505"/>
<circle cx="250.7" cy="670.7" r="3.1" fill="#050505"/>
<circle cx="364.6" cy="670.0" r="3.1" fill="#050505"/>
<circle cx="127.2" cy="780.4" r="3.1" fill="#050505"/>
<circle cx="250.0" cy="780.4" r="3.1" fill="#050505"/>
<circle cx="363.4" cy="780.3" r="3.1" fill="#050505"/>
<circle cx="126.1" cy="886.5" r="3.1" fill="#050505"/>
<circle cx="248.9" cy="886.5" r="3.1" fill="#050505"/>
<circle cx="361.6" cy="886.5" r="3.1" fill="#050505"/>
<circle cx="131" cy="450" r="3.1" fill="#050505"/>
<rect x="591.6" y="892.1" width="248.4" height="253.6" fill="#ffffff" opacity="0.13"/>
<path d="M591.6,892.1 L653.2,892.1 M653.2,892.1 L715.3,892.1 M715.3,892.1 L777.4,892.1 M777.4,892.1 L840.0,892.1 M591.6,928.3 L653.2,928.3 M653.2,928.3 L715.3,928.3 M715.3,928.3 L777.4,928.3 M777.4,928.3 L840.0,928.3 M591.6,964.6 L653.2,964.6 M653.2,964.6 L715.3,964.6 M715.3,964.6 L777.4,964.6 M777.4,964.6 L840.0,964.6 M591.6,1000.8 L653.2,1000.8 M653.2,1000.8 L715.3,1000.8 M715.3,1000.8 L777.4,1000.8 M777.4,1000.8 L840.0,1000.8 M591.6,1037.0 L653.2,1037.0 M653.2,1037.0 L715.3,1037.0 M715.3,1037.0 L777.4,1037.0 M777.4,1037.0 L840.0,1037.0 M591.6,1073.3 L653.2,1073.3 M653.2,1073.3 L715.3,1073.3 M715.3,1073.3 L777.4,1073.3 M777.4,1073.3 L840.0,1073.3 M591.6,1109.5 L653.2,1109.5 M653.2,1109.5 L715.3,1109.5 M715.3,1109.5 L777.4,1109.5 M777.4,1109.5 L840.0,1109.5 M591.6,1145.7 L653.2,1145.7 M653.2,1145.7 L715.3,1145.7 M715.3,1145.7 L777.4,1145.7 M777.4,1145.7 L840.0,1145.7 M591.6,892.1 L591.6,928.3 M653.2,892.1 L653.2,928.3 M715.3,892.1 L715.3,928.3 M777.4,892.1 L777.4,928.3 M840.0,892.1 L840.0,928.3 M591.6,928.3 L591.6,964.6 M653.2,928.3 L653.2,964.6 M715.3,928.3 L715.3,964.6 M777.4,928.3 L777.4,964.6 M840.0,928.3 L840.0,964.6 M591.6,964.6 L591.6,1000.8 M653.2,964.6 L653.2,1000.8 M715.3,964.6 L715.3,1000.8 M777.4,964.6 L777.4,1000.8 M840.0,964.6 L840.0,1000.8 M591.6,1000.8 L591.6,1037.0 M653.2,1000.8 L653.2,1037.0 M715.3,1000.8 L715.3,1037.0 M777.4,1000.8 L777.4,1037.0 M840.0,1000.8 L840.0,1037.0 M591.6,1037.0 L591.6,1073.3 M653.2,1037.0 L653.2,1073.3 M715.3,1037.0 L715.3,1073.3 M777.4,1037.0 L777.4,1073.3 M840.0,1037.0 L840.0,1073.3 M591.6,1073.3 L591.6,1109.5 M653.2,1073.3 L653.2,1109.5 M715.3,1073.3 L715.3,1109.5 M777.4,1073.3 L777.4,1109.5 M840.0,1073.3 L840.0,1109.5 M591.6,1109.5 L591.6,1145.7 M653.2,1109.5 L653.2,1145.7 M715.3,1109.5 L715.3,1145.7 M777.4,1109.5 L777.4,1145.7 M840.0,1109.5 L840.0,1145.7" stroke="#1c1c1c" stroke-width="3" fill="none" stroke-linecap="round"/>
<path d="M591.6,892.1 L653.2,892.1 M653.2,892.1 L715.3,892.1 M715.3,892.1 L777.4,892.1 M777.4,892.1 L840.0,892.1 M591.6,928.3 L653.2,928.3 M653.2,928.3 L715.3,928.3 M715.3,928.3 L777.4,928.3 M777.4,928.3 L840.0,928.3 M591.6,964.6 L653.2,964.6 M653.2,964.6 L715.3,964.6 M715.3,964.6 L777.4,964.6 M777.4,964.6 L840.0,964.6 M591.6,1000.8 L653.2,1000.8 M653.2,1000.8 L715.3,1000.8 M715.3,1000.8 L777.4,1000.8 M777.4,1000.8 L840.0,1000.8 M591.6,1037.0 L653.2,1037.0 M653.2,1037.0 L715.3,1037.0 M715.3,1037.0 L777.4,1037.0 M777.4,1037.0 L840.0,1037.0 M591.6,1073.3 L653.2,1073.3 M653.2,1073.3 L715.3,1073.3 M715.3,1073.3 L777.4,1073.3 M777.4,1073.3 L840.0,1073.3 M591.6,1109.5 L653.2,1109.5 M653.2,1109.5 L715.3,1109.5 M715.3,1109.5 L777.4,1109.5 M777.4,1109.5 L840.0,1109.5 M591.6,1145.7 L653.2,1145.7 M653.2,1145.7 L715.3,1145.7 M715.3,1145.7 L777.4,1145.7 M777.4,1145.7 L840.0,1145.7 M591.6,892.1 L591.6,928.3 M653.2,892.1 L653.2,928.3 M715.3,892.1 L715.3,928.3 M777.4,892.1 L777.4,928.3 M840.0,892.1 L840.0,928.3 M591.6,928.3 L591.6,964.6 M653.2,928.3 L653.2,964.6 M715.3,928.3 L715.3,964.6 M777.4,928.3 L777.4,964.6 M840.0,928.3 L840.0,964.6 M591.6,964.6 L591.6,1000.8 M653.2,964.6 L653.2,1000.8 M715.3,964.6 L715.3,1000.8 M777.4,964.6 L777.4,1000.8 M840.0,964.6 L840.0,1000.8 M591.6,1000.8 L591.6,1037.0 M653.2,1000.8 L653.2,1037.0 M715.3,1000.8 L715.3,1037.0 M777.4,1000.8 L777.4,1037.0 M840.0,1000.8 L840.0,1037.0 M591.6,1037.0 L591.6,1073.3 M653.2,1037.0 L653.2,1073.3 M715.3,1037.0 L715.3,1073.3 M777.4,1037.0 L777.4,1073.3 M840.0,1037.0 L840.0,1073.3 M591.6,1073.3 L591.6,1109.5 M653.2,1073.3 L653.2,1109.5 M715.3,1073.3 L715.3,1109.5 M777.4,1073.3 L777.4,1109.5 M840.0,1073.3 L840.0,1109.5 M591.6,1109.5 L591.6,1145.7 M653.2,1109.5 L653.2,1145.7 M715.3,1109.5 L715.3,1145.7 M777.4,1109.5 L777.4,1145.7 M840.0,1109.5 L840.0,1145.7" stroke="#a8b89a" stroke-width="1" fill="none"/>
<circle cx="591.6" cy="892.1" r="2.9" fill="#050505"/>
<circle cx="653.2" cy="892.1" r="2.9" fill="#050505"/>
<circle cx="715.3" cy="892.1" r="2.9" fill="#050505"/>
<circle cx="777.4" cy="892.1" r="2.9" fill="#050505"/>
<circle cx="840.0" cy="892.1" r="2.9" fill="#050505"/>
<circle cx="591.6" cy="928.3" r="2.9" fill="#050505"/>
<circle cx="653.2" cy="928.3" r="2.9" fill="#050505"/>
<circle cx="715.3" cy="928.3" r="2.9" fill="#050505"/>
<circle cx="777.4" cy="928.3" r="2.9" fill="#050505"/>
<circle cx="840.0" cy="928.3" r="2.9" fill="#050505"/>
<circle cx="591.6" cy="964.6" r="2.9" fill="#050505"/>
<circle cx="653.2" cy="964.6" r="2.9" fill="#050505"/>
<circle cx="715.3" cy="964.6" r="2.9" fill="#050505"/>
<circle cx="777.4" cy="964.6" r="2.9" fill="#050505"/>
<circle cx="840.0" cy="964.6" r="2.9" fill="#050505"/>
<circle cx="591.6" cy="1000.8" r="2.9" fill="#050505"/>
<circle cx="653.2" cy="1000.8" r="2.9" fill="#050505"/>
<circle cx="715.3" cy="1000.8" r="2.9" fill="#050505"/>
<circle cx="777.4" cy="1000.8" r="2.9" fill="#050505"/>
<circle cx="840.0" cy="1000.8" r="2.9" fill="#050505"/>
<circle cx="591.6" cy="1037.0" r="2.9" fill="#050505"/>
<circle cx="653.2" cy="1037.0" r="2.9" fill="#050505"/>
<circle cx="715.3" cy="1037.0" r="2.9" fill="#050505"/>
<circle cx="777.4" cy="1037.0" r="2.9" fill="#050505"/>
<circle cx="840.0" cy="1037.0" r="2.9" fill="#050505"/>
<circle cx="591.6" cy="1073.3" r="2.9" fill="#050505"/>
<circle cx="653.2" cy="1073.3" r="2.9" fill="#050505"/>
<circle cx="715.3" cy="1073.3" r="2.9" fill="#050505"/>
<circle cx="777.4" cy="1073.3" r="2.9" fill="#050505"/>
<circle cx="840.0" cy="1073.3" r="2.9" fill="#050505"/>
<circle cx="591.6" cy="1109.5" r="2.9" fill="#050505"/>
<circle cx="653.2" cy="1109.5" r="2.9" fill="#050505"/>
<circle cx="715.3" cy="1109.5" r="2.9" fill="#050505"/>
<circle cx="777.4" cy="1109.5" r="2.9" fill="#050505"/>
<circle cx="840.0" cy="1109.5" r="2.9" fill="#050505"/>
<circle cx="591.6" cy="1145.7" r="2.9" fill="#050505"/>
<circle cx="653.2" cy="1145.7" r="2.9" fill="#050505"/>
<circle cx="715.3" cy="1145.7" r="2.9" fill="#050505"/>
<circle cx="777.4" cy="1145.7" r="2.9" fill="#050505"/>
<circle cx="840.0" cy="1145.7" r="2.9" fill="#050505"/>
<path d="M82.7,1148.3 H100.7 M118.7,1148.3 H136.7 M109.7,1121.3 V1139.3 M109.7,1157.3 V1175.3" stroke="#000" stroke-width="1.2"/>
<circle cx="109.7" cy="1148.3" r="13.5" fill="none" stroke="#e8e8e8" stroke-width="1.6"/>
<circle cx="109.7" cy="1148.3" r="13.5" fill="none" stroke="#e03030" stroke-width="1.6" stroke-dasharray="5.3 5.3"/>
</svg>
<svg width="2048" height="1263" viewBox="0 0 2048 1263">
<clipPath id="vpclip"><rect x="1162" y="0" width="867" height="1248" rx="7"/></clipPath>
<g id="grid" stroke="#505050" stroke-width="1" fill="none" clip-path="url(#vpclip)">
<path d="M19960.5,21910.3 L2670.0,-155.0" opacity="0.89"/>
<path d="M2067.2,7127.1 L2670.0,-155.0" opacity="0.94"/>
<path d="M-2932.4,2996.5 L2670.0,-155.0" opacity="0.94"/>
<path d="M-3760.9,2312.0 L2670.0,-155.0" opacity="0.89"/>
<path d="M-4287.4,1877.0 L2670.0,-155.0" opacity="0.83"/>
<path d="M-4651.6,1576.1 L2670.0,-155.0" opacity="0.78"/>
<path d="M-4918.5,1355.5 L2670.0,-155.0" opacity="0.72"/>
<path d="M-5122.5,1187.0 L2670.0,-155.0" opacity="0.67"/>
<path d="M-5283.5,1054.0 L2670.0,-155.0" opacity="0.61"/>
<path d="M-5413.8,946.3 L2670.0,-155.0" opacity="0.56"/>
<path d="M-5521.4,857.4 L2670.0,-155.0" opacity="0.51"/>
<path d="M-5611.8,782.7 L2670.0,-155.0" opacity="0.45"/>
<path d="M-5688.8,719.1 L2670.0,-155.0" opacity="0.40"/>
<path d="M-5755.1,664.3 L2670.0,-155.0" opacity="0.34"/>
<path d="M-5812.9,616.6 L2670.0,-155.0" opacity="0.29"/>
<path d="M-5863.7,574.6 L2670.0,-155.0" opacity="0.25"/>
<path d="M-5908.7,537.5 L2670.0,-155.0" opacity="0.25"/>
<path d="M-20368.2,29765.3 L340.0,-135.0" opacity="0.89"/>
<path d="M1990.9,7441.8 L340.0,-135.0" opacity="0.94"/>
<path d="M6579.1,2861.0 L340.0,-135.0" opacity="0.94"/>
<path d="M7288.5,2152.7 L340.0,-135.0" opacity="0.89"/>
<path d="M7732.3,1709.6 L340.0,-135.0" opacity="0.83"/>
<path d="M8036.2,1406.2 L340.0,-135.0" opacity="0.78"/>
<path d="M8257.4,1185.4 L340.0,-135.0" opacity="0.72"/>
<path d="M8425.5,1017.5 L340.0,-135.0" opacity="0.67"/>
<path d="M8557.6,885.6 L340.0,-135.0" opacity="0.61"/>
<path d="M8664.2,779.2 L340.0,-135.0" opacity="0.56"/>
<path d="M8752.0,691.6 L340.0,-135.0" opacity="0.51"/>
<path d="M8825.6,618.1 L340.0,-135.0" opacity="0.45"/>
<path d="M8888.1,555.7 L340.0,-135.0" opacity="0.40"/>
<path d="M8941.9,501.9 L340.0,-135.0" opacity="0.34"/>
<path d="M8988.7,455.2 L340.0,-135.0" opacity="0.29"/>
<path d="M9029.8,414.2 L340.0,-135.0" opacity="0.25"/>
<path d="M9066.1,377.9 L340.0,-135.0" opacity="0.25"/>
</g>
<path d="M1162,544.4 L2015,1248" stroke="#9a3a4c" stroke-width="1.6" fill="none"/>
<path d="M1264,1248 L2029,485" stroke="#5e8a22" stroke-width="1.6" fill="none"/>
<g stroke="#f59c22" stroke-width="1.15" stroke-linejoin="round">
<path d="M1592.1,911.9 L1658.0,818.2 L1688.3,849.1 L1696.2,857.8 L1739.7,900.0 L1784.6,946.1 L1834.7,1001.5 L1785.9,1063.5 L1768.8,1084.6 L1731.8,1096.5 L1683.0,1029.2 L1636.9,975.1 L1598.7,927.7Z" fill="#a27247"/>
<path d="M1379.0,817.7 L1440.4,811.1 L1501.1,808.5 L1560.4,807.7 L1584.2,896.0 L1598.7,903.9 L1592.1,913.2 L1515.6,916.6 L1448.3,919.2 L1379.8,927.7 L1375.8,906.6Z" fill="#a27247"/>
<path d="M1610.7,681.0 L1639.5,671.0 L1690.5,660.0 L1707.1,655.5 L1748.1,689.9 L1796.9,701.0 L1745.9,767.5 L1710.5,816.2 L1689.4,849.5 L1658.4,817.3 L1608.5,897.1 L1604.0,793.0 L1617.3,728.7 L1624.0,691.0Z" fill="#a27247"/>
<path d="M1648.6,614.3 L1682.8,604.2 L1722.1,590.2 L1765.2,568.2 L1791.8,574.3 L1782.9,619.4 L1734.8,643.5 L1706.9,654.9 L1690.4,661.2 L1648.6,668.8 L1633.4,677.7 L1636.0,642.2Z" fill="#a27247"/>
<path d="M1648.6,614.3 L1682.8,604.2 L1690.4,643.5 L1690.4,661.2 L1648.6,668.8 L1633.4,677.7 L1636.0,642.2Z" fill="#c0834b"/>
<path d="M1575.1,542.1 L1592.9,524.3 L1624.6,526.9 L1633.4,543.4 L1633.4,558.6 L1643.6,586.4 L1658.8,609.2 L1668.9,632.1 L1652.4,654.9 L1638.5,662.5 L1622.0,654.9 L1608.1,618.1 L1597.9,601.6 L1587.8,572.5Z" fill="#a27247"/>
<path d="M1608.1,618.1 L1627.1,616.8 L1658.8,609.2 L1668.9,632.1 L1652.4,654.9 L1638.5,662.5 L1622.0,654.9Z" fill="#c0834b"/>
<path d="M1455.5,733.1 L1501.0,722.0 L1530.9,717.6 L1564.1,713.2 L1604.0,710.9 L1610.7,795.2 L1564.1,795.2 L1533.1,804.0 L1468.8,810.7 L1462.2,773.0Z" fill="#a27247"/>
<path d="M1505.4,845.1 L1538.6,808.5 L1604.0,808.5 L1602.9,894.9 L1564.1,883.8Z" fill="#c0834b"/>
<path d="M1658.4,817.3 L1689.4,849.5 L1640.6,914.9 L1610.7,894.9 L1624.0,866.1Z" fill="#c0834b"/>
<path d="M1553.1,706.5 L1574.1,679.5 L1602.9,708.7Z" fill="#a27247"/>
<path d="M1518.7,704.3 L1550.8,712.0 L1605.2,710.9 L1601.8,746.4 L1573.0,764.1 L1544.2,742.0 L1530.9,717.6Z" fill="#cd8c4e"/>
<path d="M1564.1,766.4 L1604.0,777.4 L1617.3,795.2 L1608.5,797.4 L1548.6,793.0Z" fill="#cd8c4e"/>
<path d="M1586.3,735.3 L1605.2,734.2 L1635.1,755.3 L1617.3,795.2 L1605.2,777.4 L1573.0,764.1Z" fill="#cd8c4e"/>
<path d="M1603.0,711.1 L1622.0,686.5 L1633.4,682.7 L1627.1,733.4 L1614.4,741.0Z" fill="#cd8c4e"/>
<path d="M1624.0,733.1 L1666.1,728.7 L1698.3,718.7 L1731.5,709.2 L1739.3,744.2 L1745.9,755.3 L1709.3,767.5 L1675.0,776.3 L1640.6,783.0 L1617.3,795.2 L1608.5,777.4Z" fill="#c0834b"/>
<path d="M1435.8,298.8 L1473.8,309.0 L1557.4,311.5 L1638.5,315.3 L1755.1,312.8 L1760.1,381.2 L1712.0,374.9 L1717.1,428.1 L1623.3,448.4 L1521.9,407.8 L1451.0,391.3 L1442.1,358.4Z" fill="#a27247" stroke="none"/>
<path d="M1436.6,298.9 L1441.4,359.7 L1450.9,390.1 L1520.2,410.0 L1525.0,388.2 L1513.6,381.5 L1503.1,353.0 L1482.2,323.6 L1473.7,310.3Z" fill="#a27247"/>
<path d="M1633.7,391.0 L1713.5,375.8 L1717.3,426.2 L1725.9,443.3 L1640.4,449.9 L1624.2,448.0 L1517.8,410.0 L1519.7,387.2 L1590.0,411.9Z" fill="#a27247"/>
<path d="M1757.2,313.1 L1808.1,308.4 L1785.7,348.3 L1762.0,382.5 L1702.1,373.0 L1711.6,360.6 L1742.0,318.8Z" fill="#a27247"/>
<path d="M1646.1,242.4 L1735.4,272.8 L1791.4,271.3 L1777.2,285.6 L1712.6,273.2 L1641.3,246.6Z" fill="#a27247"/>
<path d="M1777.2,285.6 L1797.1,292.2 L1753.4,311.2 L1721.1,317.9 L1753.4,309.3Z" fill="#a27247"/>
<path d="M1423.3,298.9 L1440.4,291.8 L1502.2,264.1 L1582.9,258.0 L1604.8,280.8 L1552.5,309.3 L1516.4,306.5 L1473.7,310.3 L1436.6,298.9Z" fill="#c0834b"/>
<path d="M1502.2,264.1 L1603.8,234.3 L1604.8,280.8 L1582.9,258.0Z" fill="#a27247"/>
<path d="M1603.8,234.3 L1640.9,246.6 L1604.8,280.8Z" fill="#a27247"/>
<path d="M1604.3,280.8 L1641.3,246.6 L1712.6,273.2 L1777.2,285.6 L1753.4,309.3 L1721.1,317.9 L1679.3,316.9 L1642.3,308.4 L1637.5,315.0Z" fill="#c0834b"/>
<path d="M1642.3,308.4 L1679.3,316.9 L1721.1,317.9 L1753.4,309.3 L1711.6,360.6 L1628.0,377.7 L1614.7,351.1 L1637.5,315.0Z" fill="#cd8c4e"/>
<path d="M1473.8,309.0 L1516.8,306.4 L1615.7,374.9 L1537.1,377.4 L1516.8,364.7 L1491.5,321.6Z" fill="#c0834b"/>
<path d="M1537.1,377.4 L1615.7,374.9 L1633.4,382.5 L1618.2,387.5 L1525.7,387.5Z" fill="#c0834b"/>
<path d="M1630.9,377.4 L1709.4,362.2 L1704.4,374.9 L1633.4,382.5Z" fill="#c0834b"/>
<path d="M1473.7,310.3 L1489.8,311.2 L1543.0,326.4 L1550.6,351.1 L1520.2,368.2 L1503.1,353.0 L1482.2,323.6Z" fill="#cd8c4e"/>
<path d="M1552.5,309.3 L1604.8,280.8 L1638.0,316.9 L1662.7,356.8 L1615.2,370.1 L1516.4,306.5Z" fill="#cd8c4e"/>
<path d="M1535.4,370.1 L1600.0,366.3 L1613.3,381.5 L1571.5,391.0 L1525.9,387.2Z" fill="#c0834b"/>
<path d="M1525.9,387.2 L1571.5,383.4 L1647.5,388.2 L1600.0,413.8 L1539.2,411.0 L1520.2,407.2Z" fill="#c0834b"/>
<path d="M1629.9,381.5 L1702.1,373.0 L1662.2,404.3 L1633.7,391.0Z" fill="#c0834b"/>
<path d="M1637.5,315.0 L1671.7,359.7 L1614.7,351.1Z" fill="#dc9a5c"/>
<path d="M1516.4,305.9 L1554.4,313.1 L1639.9,366.3 L1614.3,379.6Z" fill="#e6ab7c"/>
</g>
<path d="M1696.2,857.8 L1643.5,917.1 M1739.7,900.0 L1684.4,954.1 L1636.9,975.1 M1784.6,946.1 L1726.6,1013.4 L1683.0,1029.2 M1639.5,917.1 L1684.4,954.1 L1726.6,1013.4 L1768.8,1084.6 M1440.4,811.1 L1440.4,886.8 L1448.3,919.2 M1501.1,808.5 L1504.5,874.4 L1515.6,916.6 M1375.8,906.6 L1440.4,886.8 L1504.5,874.4 L1560.4,881.5 L1589.4,903.9 M1748.1,689.9 L1730.4,708.7 M1635.1,683.2 L1686.1,720.9 M1658.4,784.1 L1710.5,816.2 M1658.4,784.1 L1621.8,846.2 L1608.5,897.1 M1682.8,604.2 L1690.4,643.5 L1690.4,661.2 M1722.1,590.2 L1737.3,611.8 L1734.8,643.5 M1737.3,611.8 L1791.8,574.3 M1690.4,643.5 L1737.3,611.8 M1652.4,654.9 L1672.7,629.5 L1690.4,643.5 M1592.9,524.3 L1606.8,562.4 L1619.5,596.6 L1627.1,616.8 L1638.5,662.5 M1587.8,572.5 L1606.8,562.4 L1633.4,558.6 M1597.9,601.6 L1619.5,596.6 L1638.5,592.8 M1608.1,618.1 L1627.1,616.8 L1658.8,609.2 M1615.7,634.6 L1648.6,625.7 L1668.9,632.1 M1501.0,722.0 L1519.8,781.9 M1468.8,810.7 L1533.1,802.9 L1564.1,793.0 L1608.5,777.4 M1559.7,807.4 L1561.9,882.7 M1624.0,846.2 L1663.9,878.3 M1564.1,713.2 L1588.5,695.4 M1530.9,717.6 L1564.1,766.4 M1544.2,742.0 L1581.9,737.5 L1605.2,710.9 M1535.3,725.3 L1570.8,720.9 L1581.9,737.5 L1573.0,764.1 M1550.8,712.0 L1564.1,742.0 M1577.4,714.3 L1590.7,735.3 L1601.8,746.4 M1635.1,734.2 L1640.6,783.0 M1666.1,728.7 L1675.0,776.3 M1698.3,718.7 L1709.3,767.5 M1731.5,709.2 L1672.8,768.6 L1617.3,781.9 M1688.3,722.0 L1739.3,748.6 L1675.0,766.4 L1608.5,773.0 M1441.4,359.7 L1513.6,381.5 M1633.7,417.6 L1717.3,426.2 M1647.0,388.2 L1715.4,390.1 M1711.6,361.6 L1785.7,348.3 M1440.4,291.8 L1473.7,310.3 M1506.9,268.5 L1552.5,309.3 M1712.6,273.2 L1685.0,316.0 M1489.8,311.2 L1503.1,353.0 M1482.2,323.6 L1543.0,341.6 M1525.9,387.2 L1539.2,411.0 M1618.5,375.8 L1604.3,280.8 M1618.5,375.8 L1637.5,315.0 M1618.5,375.8 L1679.3,316.9 M1618.5,375.8 L1721.1,317.9 M1618.5,375.8 L1753.4,309.3 M1618.5,375.8 L1777.2,285.6 M1618.5,375.8 L1797.1,292.2 M1618.5,375.8 L1785.7,348.3 M1618.5,375.8 L1711.6,360.6 M1618.5,375.8 L1473.7,310.3 M1618.5,375.8 L1489.8,311.2 M1618.5,375.8 L1516.4,306.5 M1618.5,375.8 L1552.5,309.3 M1618.5,375.8 L1604.8,280.8 M1618.5,375.8 L1503.1,353.0 M1618.5,375.8 L1535.4,370.1 M1618.5,375.8 L1525.9,387.2" stroke="#f59c22" stroke-width="1.1" fill="none" stroke-linejoin="round"/>
<path d="M1612.4,379.6 C1613.2,384.7 1614.9,396.6 1617.1,410.0 C1619.3,423.4 1623.4,444.9 1625.7,460.0 C1628.0,475.1 1629.6,486.4 1630.9,500.3 C1632.2,514.2 1632.6,527.8 1633.4,543.4 C1634.2,559.0 1636.4,577.1 1636.0,594.0 C1635.6,610.9 1634.4,621.5 1630.9,644.7 C1627.4,667.9 1619.4,711.0 1615.1,733.1 C1610.8,755.2 1607.2,763.4 1605.2,777.4 C1603.2,791.4 1603.7,803.2 1602.9,817.3 C1602.2,831.3 1601.2,848.4 1600.7,861.7 C1600.2,875.0 1599.8,891.2 1599.6,897.1 L1608.5,897.1 " fill="none"/>
<path d="M1612.4,379.6 C1613.2,384.7 1614.9,396.6 1617.1,410.0 C1619.3,423.4 1623.4,444.9 1625.7,460.0 C1628.0,475.1 1629.6,486.4 1630.9,500.3 C1632.2,514.2 1632.6,527.8 1633.4,543.4 C1634.2,559.0 1636.4,577.1 1636.0,594.0 C1635.6,610.9 1634.4,621.5 1630.9,644.7 C1627.4,667.9 1619.4,711.0 1615.1,733.1 C1610.8,755.2 1607.2,763.4 1605.2,777.4 C1603.2,791.4 1603.7,803.2 1602.9,817.3 C1602.2,831.3 1601.2,848.4 1600.7,861.7 C1600.2,875.0 1599.8,891.2 1599.6,897.1 L1608.5,897.1 C1608.7,891.2 1608.9,875.0 1609.6,861.7 C1610.3,848.4 1611.6,831.3 1612.9,817.3 C1614.2,803.2 1615.3,791.4 1617.3,777.4 C1619.3,763.4 1620.9,755.2 1625.1,733.1 C1629.3,711.0 1639.0,667.9 1642.3,644.7 C1645.6,621.5 1644.2,610.9 1644.8,594.0 C1645.4,577.1 1646.1,559.0 1646.1,543.4 C1646.1,527.8 1645.7,514.2 1644.8,500.3 C1643.9,486.4 1642.8,475.1 1640.9,460.0 C1639.0,444.9 1635.4,423.4 1633.3,410.0 C1631.2,396.6 1629.3,384.7 1628.5,379.6 Z" fill="#d9944f" stroke="#f59c22" stroke-width="1.1"/>
<path d="M1620.5,379.6 C1621.2,384.7 1623.1,396.6 1625.2,410.0 C1627.3,423.4 1631.2,444.9 1633.3,460.0 C1635.4,475.1 1636.8,486.4 1637.8,500.3 C1638.9,514.2 1639.3,527.8 1639.8,543.4 C1640.2,559.0 1640.9,577.1 1640.4,594.0 C1639.9,610.9 1640.0,621.5 1636.6,644.7 C1633.2,667.9 1624.3,711.0 1620.1,733.1 C1615.9,755.2 1613.3,763.4 1611.2,777.4 C1609.2,791.4 1608.9,803.2 1607.9,817.3 C1606.9,831.3 1605.8,848.4 1605.2,861.7 C1604.5,875.0 1604.2,891.2 1604.0,897.1" fill="none" stroke="#f59c22" stroke-width="1"/>
<path d="M1616.4,379.6 C1617.2,384.7 1619.0,396.6 1621.1,410.0 C1623.3,423.4 1627.3,444.9 1629.5,460.0 C1631.7,475.1 1633.2,486.4 1634.4,500.3 C1635.6,514.2 1635.9,527.8 1636.6,543.4 C1637.2,559.0 1638.7,577.1 1638.2,594.0 C1637.7,610.9 1637.2,621.5 1633.8,644.7 C1630.3,667.9 1621.9,711.0 1617.6,733.1 C1613.3,755.2 1610.3,763.4 1608.2,777.4 C1606.2,791.4 1606.3,803.2 1605.4,817.3 C1604.5,831.3 1603.5,848.4 1602.9,861.7 C1602.3,875.0 1602.0,891.2 1601.8,897.1" fill="none" stroke="#f7a63a" stroke-width="0.8"/>
<path d="M1162,544.4 L2015,1248" stroke="#d86a7a" stroke-width="1.2" fill="none" opacity="0.38"/>
<path d="M1264,1248 L2029,485" stroke="#8db23a" stroke-width="1.2" fill="none" opacity="0.38"/>
<g fill="#ff9a00">
<circle cx="1408.8" cy="855.2" r="1.5"/>
<circle cx="1472.1" cy="844.6" r="1.5"/>
<circle cx="1410.1" cy="909.7" r="1.5"/>
<circle cx="1477.4" cy="898.7" r="1.5"/>
<circle cx="1540.1" cy="896.0" r="1.5"/>
<circle cx="1531.4" cy="843.3" r="1.5"/>
<circle cx="1569.7" cy="849.9" r="1.5"/>
<circle cx="1584.9" cy="852.0" r="1.5"/>
<circle cx="1663.3" cy="831.4" r="1.5"/>
<circle cx="1648.8" cy="874.9" r="1.5"/>
<circle cx="1627.1" cy="894.7" r="1.5"/>
<circle cx="1689.6" cy="906.6" r="1.5"/>
<circle cx="1733.2" cy="952.7" r="1.5"/>
<circle cx="1681.7" cy="992.3" r="1.5"/>
<circle cx="1778.0" cy="1011.5" r="1.5"/>
<circle cx="1727.4" cy="1055.6" r="1.5"/>
<circle cx="1639.5" cy="941.4" r="1.5"/>
<circle cx="1590.3" cy="551.0" r="1.5"/>
<circle cx="1615.7" cy="543.4" r="1.5"/>
<circle cx="1603.0" cy="583.9" r="1.5"/>
<circle cx="1628.4" cy="576.3" r="1.5"/>
<circle cx="1613.1" cy="611.8" r="1.5"/>
<circle cx="1620.8" cy="639.7" r="1.5"/>
<circle cx="1752.5" cy="585.9" r="1.5"/>
<circle cx="1761.4" cy="613.0" r="1.5"/>
<circle cx="1706.9" cy="611.8" r="1.5"/>
<circle cx="1713.2" cy="640.2" r="1.5"/>
<circle cx="1670.7" cy="659.9" r="1.5"/>
<circle cx="1690.4" cy="682.7" r="1.5"/>
<circle cx="1750.0" cy="719.0" r="1.5"/>
<circle cx="1491.7" cy="293.2" r="1.5"/>
<circle cx="1561.4" cy="279.5" r="1.5"/>
<circle cx="1549.3" cy="299.2" r="1.5"/>
<circle cx="1595.7" cy="313.5" r="1.5"/>
<circle cx="1469.9" cy="336.5" r="1.5"/>
<circle cx="1528.2" cy="328.7" r="1.5"/>
<circle cx="1528.2" cy="352.4" r="1.5"/>
<circle cx="1486.0" cy="384.4" r="1.5"/>
<circle cx="1572.1" cy="375.4" r="1.5"/>
<circle cx="1572.1" cy="392.5" r="1.5"/>
<circle cx="1606.7" cy="389.1" r="1.5"/>
<circle cx="1573.0" cy="415.7" r="1.5"/>
<circle cx="1656.5" cy="283.7" r="1.5"/>
<circle cx="1666.6" cy="297.0" r="1.5"/>
<circle cx="1732.5" cy="295.6" r="1.5"/>
<circle cx="1757.2" cy="333.6" r="1.5"/>
<circle cx="1738.8" cy="366.3" r="1.5"/>
<circle cx="1679.3" cy="345.8" r="1.5"/>
<circle cx="1691.3" cy="341.6" r="1.5"/>
<circle cx="1695.8" cy="341.6" r="1.5"/>
<circle cx="1671.7" cy="434.3" r="1.5"/>
<circle cx="1665.4" cy="402.8" r="1.5"/>
<circle cx="1606.7" cy="389.7" r="1.5"/>
<circle cx="1486.6" cy="761.9" r="1.5"/>
<circle cx="1531.6" cy="746.4" r="1.5"/>
<circle cx="1522.0" cy="796.3" r="1.5"/>
<circle cx="1472.1" cy="844.4" r="1.5"/>
<circle cx="1531.6" cy="842.8" r="1.5"/>
<circle cx="1569.7" cy="849.5" r="1.5"/>
<circle cx="1584.8" cy="852.4" r="1.5"/>
<circle cx="1476.6" cy="898.3" r="1.5"/>
<circle cx="1539.8" cy="896.0" r="1.5"/>
<circle cx="1690.5" cy="682.8" r="1.5"/>
<circle cx="1750.4" cy="719.1" r="1.5"/>
<circle cx="1652.4" cy="748.6" r="1.5"/>
<circle cx="1684.5" cy="739.1" r="1.5"/>
<circle cx="1718.2" cy="730.2" r="1.5"/>
<circle cx="1724.9" cy="755.3" r="1.5"/>
<circle cx="1690.5" cy="764.1" r="1.5"/>
<circle cx="1663.5" cy="831.1" r="1.5"/>
<circle cx="1649.0" cy="875.0" r="1.5"/>
<circle cx="1690.5" cy="906.0" r="1.5"/>
</g>
<path d="M1584,895.3 L1596,904.3 M1612,915.3 L1624,923.3 M1612,901.3 L1621,892.3 M1596,917.3 L1590,924.3 M1604,896.3 V903.3 M1604,915.3 V923.3" stroke="#1a1a1a" stroke-width="1.2"/>
<circle cx="1604" cy="909.3" r="13.5" fill="none" stroke="#f0f0f0" stroke-width="1.6"/>
<circle cx="1604" cy="909.3" r="13.5" fill="none" stroke="#e04040" stroke-width="1.6" stroke-dasharray="5.3 5.3"/>
</svg>
<svg width="2048" height="1263" viewBox="0 0 2048 1263" font-family="'Liberation Sans', sans-serif">
<rect x="11.7" y="-6" width="42.5" height="9.5" rx="4" fill="#1d1d1d"/>
<rect x="61.5" y="-6" width="27.900000000000006" height="9.5" rx="4" fill="#1d1d1d"/>
<rect x="96.7" y="-6" width="25.799999999999997" height="9.5" rx="4" fill="#4772b3"/>
<rect x="122.5" y="-6" width="84.1" height="9.5" rx="4" fill="#545454"/>
<rect x="215" y="-6" width="41" height="9.5" rx="4" fill="#1d1d1d"/>
<rect x="525.6" y="-6" width="41.0" height="9.5" rx="4" fill="#1d1d1d"/>
<rect x="575" y="-6" width="70" height="9.5" rx="4" fill="#1d1d1d"/>
<rect x="653.8" y="-6" width="68.20000000000005" height="9.5" rx="4" fill="#1d1d1d"/>
<rect x="732.4" y="-6" width="40.60000000000002" height="9.5" rx="4" fill="#545454"/>
<rect x="773" y="-6" width="168" height="9.5" rx="4" fill="#1a1a1a"/>
<rect x="941" y="-6" width="111" height="9.5" rx="4" fill="#545454"/>
<rect x="1110" y="-6" width="25.700000000000045" height="9.5" rx="4" fill="#4772b3"/>
<rect x="150.6" y="0" width="1" height="3.5" fill="#3a3a3a"/>
<rect x="178.6" y="0" width="1" height="3.5" fill="#3a3a3a"/>
<rect x="980" y="0" width="1" height="3.5" fill="#3a3a3a"/>
<rect x="1015" y="0" width="1" height="3.5" fill="#3a3a3a"/>
<rect x="20" y="0" width="3" height="1.6" fill="#d8d8d8"/>
<rect x="72" y="0" width="8" height="1.6" fill="#d8d8d8"/>
<rect x="102" y="0" width="9" height="1.6" fill="#d8d8d8"/>
<rect x="130" y="0" width="7" height="1.6" fill="#d8d8d8"/>
<rect x="156" y="0" width="8" height="1.6" fill="#d8d8d8"/>
<rect x="186" y="0" width="8" height="1.6" fill="#d8d8d8"/>
<rect x="220" y="0" width="14" height="1.6" fill="#d8d8d8"/>
<rect x="530" y="0" width="5" height="1.6" fill="#d8d8d8"/>
<rect x="537" y="0" width="5" height="1.6" fill="#d8d8d8"/>
<rect x="587" y="0" width="3" height="1.6" fill="#d8d8d8"/>
<rect x="664" y="0" width="4" height="1.6" fill="#d8d8d8"/>
<rect x="738" y="0" width="8" height="1.6" fill="#d8d8d8"/>
<rect x="747" y="0" width="4" height="1.6" fill="#d8d8d8"/>
<rect x="948" y="0" width="3" height="1.6" fill="#d8d8d8"/>
<rect x="960" y="0" width="10" height="1.6" fill="#d8d8d8"/>
<rect x="990" y="0" width="12" height="1.6" fill="#d8d8d8"/>
<rect x="1064" y="0" width="1.5" height="1.6" fill="#d8d8d8"/>
<rect x="1116" y="0" width="5" height="1.6" fill="#d8d8d8"/>
<rect x="1126" y="0" width="4" height="1.6" fill="#d8d8d8"/>
<rect x="1174" y="-6" width="40.700000000000045" height="9" rx="4" fill="#1d1d1d"/>
<rect x="1225.7" y="-6" width="147.70000000000005" height="9" rx="4" fill="#1d1d1d"/>
<rect x="1384" y="-6" width="54" height="9" rx="4" fill="#545454"/>
<rect x="1438" y="-6" width="26" height="9" rx="4" fill="#4772b3"/>
<rect x="1967" y="-4" width="64" height="7" rx="3" fill="#2a2a2a"/>
<rect x="1410.5" y="0" width="1" height="3" fill="#3a3a3a"/>
<rect x="10" y="1257" width="44" height="13" rx="4" fill="#2a2a2a"/>
<rect x="61" y="1257" width="130" height="13" rx="4" fill="#2a2a2a"/>
<rect x="757" y="1257" width="110" height="13" rx="4" fill="#2a2a2a"/>
<rect x="875" y="1257" width="209" height="13" rx="4" fill="#2a2a2a"/>
<rect x="1124" y="1257" width="82" height="13" rx="4" fill="#4a4a4a"/>
<rect x="1849" y="1257" width="30" height="13" rx="4" fill="#2a2a2a"/>
<rect x="1886" y="1257" width="70" height="13" rx="4" fill="#2a2a2a"/>
<rect x="1964" y="1257" width="27" height="13" rx="4" fill="#4772b3"/>
<rect x="1991" y="1257" width="29" height="13" rx="4" fill="#4a4a4a"/>
<rect x="445" y="1260.5" width="17" height="4" rx="1.5" fill="#4772b3"/>
<rect x="918" y="1257" width="1" height="8" fill="#1b1b1b"/><rect x="1151" y="1257" width="1" height="8" fill="#333"/><rect x="1179" y="1257" width="1" height="8" fill="#333"/>
<rect x="22" y="1260.5" width="12" height="3" fill="#cfcfcf"/>
<rect x="70" y="1260.5" width="4" height="3" fill="#cfcfcf"/>
<rect x="86" y="1260.5" width="4" height="3" fill="#cfcfcf"/>
<rect x="888" y="1260.5" width="9" height="3" fill="#cfcfcf"/>
<rect x="1133" y="1260.5" width="6" height="3" fill="#cfcfcf"/>
<rect x="1163" y="1260.5" width="7" height="3" fill="#cfcfcf"/>
<rect x="1232" y="1260.5" width="3" height="3" fill="#cfcfcf"/>
<rect x="1860" y="1260.5" width="5" height="3" fill="#cfcfcf"/>
<rect x="1897" y="1260.5" width="10" height="3" fill="#cfcfcf"/>
<rect x="1921" y="1260.5" width="5" height="3" fill="#cfcfcf"/>
<rect x="1971" y="1260.5" width="10" height="3" fill="#cfcfcf"/>
<rect x="2029" y="0" width="19" height="1263" fill="#1b1b1b"/>
<path d="M2032,0 H2048 V408 H2038 Q2032,408 2032,402Z" fill="#282828"/>
<rect x="2032" y="118" width="16" height="27.5" fill="#2b2b2b"/><rect x="2032" y="173" width="16" height="27.5" fill="#2b2b2b"/><rect x="2032" y="228" width="16" height="27.5" fill="#2b2b2b"/><rect x="2032" y="283" width="16" height="27.5" fill="#2b2b2b"/>
<path d="M2043,-2 Q2044,4 2049,4.5" fill="none" stroke="#3a3a3a" stroke-width="1"/>
<circle cx="2045.5" cy="103.8" r="2.7" fill="#d6d6d6"/>
<circle cx="2045.5" cy="131.4" r="2.7" fill="#d6d6d6"/>
<circle cx="2045.5" cy="159" r="2.7" fill="#d6d6d6"/>
<circle cx="2045.5" cy="186.6" r="2.7" fill="#d6d6d6"/>
<circle cx="2045.5" cy="214.4" r="2.7" fill="#d6d6d6"/>
<circle cx="2045.5" cy="297" r="2.7" fill="#d6d6d6"/>
<path d="M2038,413 H2048 V447 H2032 V419 Q2032,413 2038,413Z" fill="#303030"/>
<rect x="2041" y="418" width="10" height="24" rx="4" fill="#222"/>
<rect x="2032" y="447" width="16" height="820" fill="#1e1e1e"/>
<path d="M2041,748 H2048 V785 H2041 Q2036,785 2036,780 V753 Q2036,748 2041,748Z" fill="#3a3a3a"/>
<g fill="none" stroke-width="1.8">
<path d="M2048,469 V474 M2045,480 a4,4 0 1 0 6,0" stroke="#d8d8d8" stroke-width="2.4"/>
<rect x="2045.5" y="520.5" width="8" height="13" stroke="#d8d8d8"/>
<rect x="2045" y="560" width="8" height="9" rx="2" fill="#d8d8d8" stroke="none"/>
<path d="M2048,592 H2045.5 V610 H2050" stroke="#d8d8d8" stroke-width="1.5"/>
<path d="M2050,628 Q2044,634 2045,641 Q2047,644 2050,643Z" fill="#d8d8d8" stroke="none"/>
<circle cx="2051" cy="681" r="5.5" stroke="#e0626e" stroke-width="2"/>
<path d="M2048,719 H2045.5 V724 M2045.5,731 V737 H2048" stroke="#e89a3c" stroke-width="1.6"/>
<path d="M2044,774 l4,-5 l4,5 l-4,4z" fill="#5a8cf0" stroke="none"/>
<circle cx="2047.5" cy="798" r="2.6" fill="#5a8cf0" stroke="none"/><path d="M2047.5,800 V812" stroke="#5a8cf0"/>
<circle cx="2052" cy="842" r="6.5" stroke="#4a7fe0"/>
<circle cx="2052" cy="883" r="6" stroke="#4a7fe0"/><circle cx="2052" cy="883" r="2" fill="#4a7fe0" stroke="none"/>
<path d="M2044.5,909 h4 v8 h-4z" fill="#2fb68a" stroke="none"/>
<circle cx="2052" cy="957" r="6.5" fill="#d9606a" stroke="none"/>
</g>
<path d="M0,29.5 H6 Q10.5,29.5 10.5,34 V43 Q10.5,47 6,47 H0Z" fill="#262626"/>
<path d="M2.2,32.8 L7.2,38.3 L2.2,43.8" stroke="#a8a8a8" stroke-width="1.6" fill="none"/>
<path d="M1160,29 H1154 Q1149.5,29 1149.5,33.5 V43.5 Q1149.5,48 1154,48 H1160Z" fill="#2a2a2a"/>
<path d="M1158,33 L1153,38.5 L1158,44" stroke="#a8a8a8" stroke-width="1.6" fill="none"/>
<circle cx="1127.2" cy="40.3" r="19" fill="#252525"/>
<g transform="translate(1111.2,24.299999999999997)"><path d="M12.6,22.2 L4.8,27.6" stroke="#e6e6e6" stroke-width="3.2" stroke-linecap="round"/>
<circle cx="18.3" cy="14.8" r="9.3" fill="#e6e6e6"/>
<path d="M18.3,9.6 V20 M13.1,14.8 H23.5" stroke="#2a2a2a" stroke-width="1.9"/></g>
<circle cx="1127.2" cy="84.8" r="19" fill="#252525"/>
<g transform="translate(1111.2,68.8)"><g stroke="#e6e6e6" stroke-linecap="round" fill="none">
<path d="M11.9,7.2 L13.4,19" stroke-width="3.3"/><path d="M17,5.6 V19" stroke-width="3.4"/>
<path d="M22.1,7.2 L20.9,19" stroke-width="3.3"/><path d="M26.2,13.5 L24,22" stroke-width="3"/>
<path d="M5.2,17.6 L11,23.5" stroke-width="3.6"/></g>
<path d="M9.5,18 H24.5 Q25.5,24 21.5,27.8 Q17,30 12.5,27.5 Q9,24 9.5,18Z" fill="#e6e6e6"/></g>
<rect x="1160" y="0" width="2.2" height="1252" fill="#161616"/>
<rect x="1164" y="6" width="150" height="40" rx="6" fill="#373737" opacity="0.55"/>
<rect x="1773" y="6" width="255" height="40" rx="6" fill="#373737" opacity="0.55"/>
<rect x="1173.2" y="13.2" width="133.1" height="26" rx="4" fill="#545454"/>
<path d="M1177.2,13.2 H1199.82 V39.2 H1177.2 Q1173.2,39.2 1173.2,35.2 V17.2 Q1173.2,13.2 1177.2,13.2Z" fill="#4772b3"/>
<rect x="1225.9" y="13.2" width="1" height="26" fill="#3d3d3d"/>
<rect x="1252.6" y="13.2" width="1" height="26" fill="#3d3d3d"/>
<rect x="1279.2" y="13.2" width="1" height="26" fill="#3d3d3d"/>
<g transform="translate(1186.5,26.4) scale(1.22) translate(-11,-11)"><rect x="3.2" y="3.2" width="15.6" height="15.6" fill="none" stroke="#f4f4f4" stroke-width="1.7" stroke-dasharray="2.2 2.25"/></g>
<g transform="translate(1213.1,26.4) scale(1.22) translate(-11,-11)"><path d="M8,3 H19.5 V14 H14.5 V19.5 H3 V8.5 H8Z" fill="#d4d4d4"/></g>
<g transform="translate(1239.8,26.4) scale(1.22) translate(-11,-11)"><path d="M8.5,3 H19.5 V14 H14.5 V8.2 H8.5Z" fill="#d4d4d4"/><path d="M3.8,9 V18.6 H13.8" fill="none" stroke="#cfcfcf" stroke-width="1.6" stroke-dasharray="2.4 2.4"/></g>
<g transform="translate(1266.4,26.4) scale(1.22) translate(-11,-11)"><path d="M8,3 H19.5 V14 H14.5 V19.5 H3 V8.5 H8Z" fill="#d4d4d4"/><rect x="8.4" y="8.6" width="6" height="5.6" fill="#454545"/></g>
<g transform="translate(1293.0,26.4) scale(1.22) translate(-11,-11)"><rect x="7.6" y="7.6" width="7" height="7" fill="#d4d4d4"/><path d="M8,4 H18.6 V14 M4,8.6 V18.4 H14" fill="none" stroke="#cfcfcf" stroke-width="1.5" stroke-dasharray="2.3 2.3"/></g>
<g transform="translate(1787.5,16.5)"><g fill="none" stroke="#bdbdbd" stroke-width="1.7" stroke-linecap="round">
<path d="M8.2,2.4 Q2.6,-0.2 2,4.4 Q1.8,8 6,9.6 Q1.2,11.4 2,15.6 Q3,19.6 7.6,17.6"/>
<path d="M13.8,2.4 Q19.4,-0.2 20,4.4 Q20.2,8 16,9.6 Q20.8,11.4 20,15.6 Q19,19.6 14.4,17.6"/></g>
<path d="M11,0 V20" stroke="#e8e8e8" stroke-width="1.3" stroke-dasharray="2.2 1.6"/></g>
<rect x="1813.2" y="13.2" width="68.8" height="26" rx="4" fill="#545454"/>
<rect x="1835.6" y="13.2" width="1" height="26" fill="#484848"/><rect x="1859.6" y="13.2" width="1" height="26" fill="#484848"/>
<text x="1824.6" y="32" font-size="16.5" fill="#f0f0f0" text-anchor="middle">X</text>
<text x="1847.7" y="32" font-size="16.5" fill="#f0f0f0" text-anchor="middle">Y</text>
<text x="1871" y="32" font-size="16.5" fill="#f0f0f0" text-anchor="middle">Z</text>
<rect x="1891" y="13.2" width="25.6" height="26" rx="4" fill="#545454"/>
<g transform="translate(1892.8,15.2)"><rect x="15.2" y="1.8" width="5" height="5" fill="none" stroke="#d0d0d0" stroke-width="1.4"/><rect x="1.8" y="15.2" width="5" height="5" fill="none" stroke="#d0d0d0" stroke-width="1.4"/>
<path d="M4.5,13.5 Q5,6 13.5,4.5 M8.5,17.6 Q16,17 17.6,8.8" fill="none" stroke="#8a8a8a" stroke-width="1.4" stroke-dasharray="2.4 2.4"/></g>
<rect x="1926.2" y="13.5" width="91.7" height="25.5" rx="4" fill="#272727"/>
<text x="1936.3" y="32" font-size="16.5" fill="#e6e6e6" textLength="57.5" lengthAdjust="spacingAndGlyphs">Options</text>
<path d="M2005,24.8 L2010,29.6 L2015,24.8" stroke="#e0e0e0" stroke-width="1.7" fill="none"/>
<path d="M2029,66 H2024 Q2019.5,66 2019.5,70.5 V79.5 Q2019.5,84 2024,84 H2029Z" fill="#353535"/>
<path d="M2027,69.5 L2022,75 L2027,80.5" stroke="#a8a8a8" stroke-width="1.6" fill="none"/>
<g font-size="16.5" fill="#ececec" stroke="#ececec" stroke-width="0.35">
<text x="1254.5" y="73.2" textLength="128.7" lengthAdjust="spacing">User Perspective</text>
<text x="1254.5" y="98.9" textLength="151.9" lengthAdjust="spacing">(18) poppy leaf.017</text>
<text x="1254.5" y="139.2" textLength="57.9" lengthAdjust="spacing">Objects</text>
<text x="1338" y="139.2" textLength="35.4" lengthAdjust="spacing">1 / 4</text>
<text x="1254.5" y="163.8" textLength="61.5" lengthAdjust="spacing">Vertices</text>
<text x="1338" y="163.8" textLength="76.9" lengthAdjust="spacing">434 / 434</text>
<text x="1254.5" y="188.6" textLength="45.7" lengthAdjust="spacing">Edges</text>
<text x="1338" y="188.6" textLength="76.9" lengthAdjust="spacing">658 / 658</text>
<text x="1254.5" y="213.6" textLength="43.9" lengthAdjust="spacing">Faces</text>
<text x="1338" y="213.6" textLength="76.9" lengthAdjust="spacing">252 / 252</text>
<text x="1254.5" y="238.2" textLength="68.8" lengthAdjust="spacing">Triangles</text>
<text x="1338" y="238.2" textLength="29.8" lengthAdjust="spacing">496</text>
</g>
<rect x="1174" y="56.6" width="55.6" height="93.2" rx="5" fill="#222222" opacity="0.96"/>
<path d="M1179,56.6 H1224.6 Q1229.6,56.6 1229.6,61.6 V103.20000000000002 H1174 V61.6 Q1174,56.6 1179,56.6Z" fill="#4772b3"/>
<g transform="translate(1185.4,63.1)"><rect x="1.2" y="1.2" width="29.6" height="29.6" rx="2.5" fill="none" stroke="#f2a52c" stroke-width="2.3" stroke-dasharray="6.2 3.8" stroke-dashoffset="3"/>
<path d="M11.6,9.8 L24,18.6 L17.2,19.6 L13,24.4Z" fill="#e6e6e6"/></g>
<path d="M1226.6,94.7 V100.2 H1221.1Z" fill="#8a8a8a"/>
<rect x="1174" y="102.7" width="55.6" height="1" fill="#303030"/>
<g transform="translate(1185.4,109.7)"><circle cx="16" cy="16" r="15.2" fill="none" stroke="#ededed" stroke-width="1.9"/>
<circle cx="16" cy="16" r="15.2" fill="none" stroke="#a83242" stroke-width="1.9" stroke-dasharray="6 6"/>
<path d="M16,6 V12.5 M16,19.5 V26 M6,16 H12.5 M19.5,16 H26" stroke="#b8b8b8" stroke-width="1.7"/></g>
<rect x="1174" y="159" width="55.6" height="189.0" rx="5" fill="#222222" opacity="0.96"/>
<g transform="translate(1185.4,165.8)"><g fill="#e6e6e6"><path d="M16,0.8 L20.6,7.8 H11.4Z"/><path d="M16,31.2 L20.6,24.2 H11.4Z"/><path d="M0.8,16 L7.8,11.4 V20.6Z"/><path d="M31.2,16 L24.2,11.4 V20.6Z"/></g>
<path d="M16,8 V12.6 M16,19.4 V24 M8,16 H12.6 M19.4,16 H24" stroke="#e6e6e6" stroke-width="2.2"/></g>
<rect x="1174" y="205.8" width="55.6" height="1" fill="#303030"/>
<g transform="translate(1185.4,213.1)"><path d="M4.6,10.6 A12.8,12.8 0 0 1 27.4,10.6 M27.4,22.4 A12.8,12.8 0 0 1 4.6,22.4" fill="none" stroke="#e6e6e6" stroke-width="2"/>
<path d="M-1.4,14.8 H7 L2.8,22Z" fill="#e6e6e6"/><path d="M33.4,18.2 H25 L29.2,11Z" fill="#e6e6e6"/>
<path d="M16,11 L21,16 L16,21 L11,16Z" fill="#bdbdbd"/></g>
<rect x="1174" y="253.0" width="55.6" height="1" fill="#303030"/>
<g transform="translate(1185.4,260.3)"><path d="M6,5 H28 V27 H19" fill="none" stroke="#c8c8c8" stroke-width="1.4"/><path d="M6,5 V15" stroke="#c8c8c8" stroke-width="1.4"/>
<rect x="4.5" y="16" width="13" height="13" fill="#e6e6e6"/>
<path d="M18.5,14.5 L25,8" stroke="#e6e6e6" stroke-width="1.9"/><path d="M26.4,6.4 L25.4,12 L20.8,7.4Z" fill="#e6e6e6"/></g>
<path d="M1226.6,292.2 V297.8 H1221.1Z" fill="#8a8a8a"/>
<rect x="1174" y="300.2" width="55.6" height="1" fill="#303030"/>
<g transform="translate(1185.4,307.6)"><circle cx="16" cy="16" r="12.6" fill="none" stroke="#e6e6e6" stroke-width="1.8" stroke-dasharray="9.8 10" stroke-dashoffset="-5"/>
<rect x="10.6" y="10.6" width="10.8" height="10.8" fill="#e6e6e6"/>
<g fill="#e6e6e6"><path d="M16,0.6 L20,6.4 H12Z"/><path d="M16,31.4 L20,25.6 H12Z"/><path d="M0.6,16 L6.4,12 V20Z"/><path d="M31.4,16 L25.6,12 V20Z"/></g></g>
<rect x="1174" y="357" width="55.6" height="94.0" rx="5" fill="#222222" opacity="0.96"/>
<g transform="translate(1185.4,363.7)"><path d="M22.4,2.2 L27.8,7 L10,23.4 L4.6,18.4Z" fill="#e6e6e6"/><path d="M3.6,19.6 L8.8,24.4 L1.6,26.4Z" fill="#e6e6e6"/>
<path d="M20.8,3.6 L26.4,8.6" stroke="#222" stroke-width="1.2"/>
<path d="M4,28 Q11,31 17,24 T30,26.6" fill="none" stroke="#8ddcab" stroke-width="2"/></g>
<path d="M1226.6,395.5 V401.0 H1221.1Z" fill="#8a8a8a"/>
<rect x="1174" y="403.5" width="55.6" height="1" fill="#303030"/>
<g transform="translate(1185.4,410.7)"><path d="M3,0.8 H8 V26 H31.6 V31 H3Z" fill="#e6e6e6"/>
<path d="M5.6,3.5 H8 M5.6,6.5 H8 M5.6,9.5 H8 M5.6,12.5 H8 M5.6,15.5 H8 M5.6,18.5 H8 M5.6,21.5 H8 M11,28.6 V26 M14,28.6 V26 M17,28.6 V26 M20,28.6 V26 M23,28.6 V26 M26,28.6 V26 M29,28.6 V26" stroke="#2a2a2a" stroke-width="1"/>
<path d="M10.2,25 V11.6 Q23.6,12.4 25.2,25Z" fill="#8ddcab"/><path d="M10.2,9.2 Q26.6,10 27.8,25" fill="none" stroke="#8ddcab" stroke-width="1.6"/></g>
<rect x="1174" y="460.2" width="55.6" height="45.3" rx="5" fill="#222222" opacity="0.96"/>
<g transform="translate(1185.4,466.1)"><g fill="none" stroke="#8ddcab" stroke-width="1.5" stroke-linejoin="round"><path d="M8.6,13 H25 V30 H8.6Z"/><path d="M8.6,13 L15,6.8 H31 L25,13 M31,6.8 V23.6 L25,30"/></g>
<path d="M5.4,0.2 V10.6 M0.2,5.4 H10.6" stroke="#8ddcab" stroke-width="2.6"/></g>
<path d="M1226.6,497.0 V502.5 H1221.1Z" fill="#8a8a8a"/>
<rect x="1174" y="514" width="55.6" height="572.0" rx="5" fill="#222222" opacity="0.96"/>
<g transform="translate(1185.4,519.6)"><g fill="none" stroke="#e6e6e6" stroke-width="1.4" stroke-linejoin="round"><path d="M4,14 H22 V30.6 H4Z"/><path d="M4,14 L9.6,8 H28 L22,14 M28,8 V24.6 L22,30.6"/></g><path d="M4,14 V5.6 L9.6,0.6 H28 V8 L22,14Z" fill="#8ddcab"/><path d="M4,5.8 H22 L28,0.8 M22,5.8 V14" stroke="#6fbf8f" stroke-width="0.9" fill="none"/></g>
<path d="M1226.6,553.2 V558.7 H1221.1Z" fill="#8a8a8a"/>
<rect x="1174" y="561.2" width="55.6" height="1" fill="#303030"/>
<g transform="translate(1185.4,567.3)"><path d="M4,11 H22 V30.6 H4Z" fill="#8ddcab"/><rect x="9.4" y="17" width="7.2" height="7.6" fill="#222"/>
<path d="M4,11 L9.4,17 M22,11 L16.6,17 M4,30.6 L9.4,24.6 M22,30.6 L16.6,24.6" stroke="#222" stroke-width="1.1"/><g fill="none" stroke="#e6e6e6" stroke-width="1.4" stroke-linejoin="round"><path d="M4,11 H22 V30.6 H4Z"/><path d="M4,11 L9.6,5 H28 L22,11 M28,5 V24.6 L22,30.6"/></g></g>
<rect x="1174" y="608.8" width="55.6" height="1" fill="#303030"/>
<g transform="translate(1185.4,615.0)"><g fill="none" stroke="#e6e6e6" stroke-width="1.4" stroke-linejoin="round"><path d="M4,14 H22 V30.6 H4Z"/><path d="M4,14 L9.6,8 H28 L22,14 M28,8 V24.6 L22,30.6"/></g><path d="M4,14 L8.6,6.6 L13.6,3.4 H23.6 L27.6,8 L22,14Z" fill="#8ddcab"/><path d="M16.6,14 L19.6,5.6 L23.6,3.4" stroke="#dedede" stroke-width="1.3" fill="none"/><path d="M4,14 L8.6,6.6 L13.6,3.4 H23.6 L28,8.4" stroke="#e6e6e6" stroke-width="1.3" fill="none"/></g>
<rect x="1174" y="656.5" width="55.6" height="1" fill="#303030"/>
<g transform="translate(1185.4,662.6)"><g fill="none" stroke="#e6e6e6" stroke-width="1.4" stroke-linejoin="round"><path d="M4,11 H10 M16,11 H22 V30.6 H16 M10,30.6 H4 V11"/><path d="M4,11 L9.6,5 H14 M20,5 H28 L22,11 M28,5 V24.6 L22,30.6"/></g>
<path d="M13,31.6 V11 L18.4,4" fill="none" stroke="#8ddcab" stroke-width="2.2"/></g>
<path d="M1226.6,696.2 V701.7 H1221.1Z" fill="#8a8a8a"/>
<rect x="1174" y="704.2" width="55.6" height="1" fill="#303030"/>
<g transform="translate(1185.4,710.3)"><g fill="none" stroke="#e6e6e6" stroke-width="1.4" stroke-linejoin="round"><path d="M4,11 H22 V30.6 H4Z"/><path d="M4,11 L9.6,5 H28 L22,11 M28,5 V24.6 L22,30.6"/></g><path d="M9.4,10.6 L18.4,4.4 M9.4,10.6 L17.6,29" stroke="#8ddcab" stroke-width="1.8" fill="none"/><circle cx="9.4" cy="10.6" r="2.3" fill="#8ddcab"/><circle cx="18.4" cy="4.4" r="2.3" fill="#8ddcab"/><circle cx="17.6" cy="29" r="2.3" fill="#8ddcab"/></g>
<path d="M1226.6,743.8 V749.3 H1221.1Z" fill="#8a8a8a"/>
<rect x="1174" y="751.8" width="55.6" height="1" fill="#303030"/>
<g transform="translate(1185.4,758.0)"><path d="M4.6,29.6 L5,17 L13.6,4.6 L28.2,10 L28.6,29.6Z" fill="#8ddcab"/>
<g fill="#e6e6e6"><circle cx="4.6" cy="29.6" r="2.6"/><circle cx="4.6" cy="16.4" r="2.6"/><circle cx="13.6" cy="4" r="2.6"/><circle cx="28.4" cy="9.4" r="2.6"/><circle cx="28.6" cy="29.6" r="2.6"/></g></g>
<rect x="1174" y="799.5" width="55.6" height="1" fill="#303030"/>
<g transform="translate(1185.4,805.6)"><path d="M14.6,18 V5 A13.2,13.2 0 1 0 27.4,21.4 Z" fill="#8ddcab"/>
<path d="M14.6,18 L1.6,15.6 M14.6,18 L5.4,27.6 M14.6,18 L16,31.2 M14.6,18 L5.6,8.4 M14.6,18 L25,26.6" stroke="#222" stroke-width="1.1"/>
<path d="M9.6,4.8 Q13.6,1.6 18,2 V17.6" fill="none" stroke="#e6e6e6" stroke-width="1.3"/><path d="M27,7.4 Q32.6,13.6 29.6,22.4 Q31.6,15 26,10.4Z" fill="#e6e6e6"/><path d="M27,7.4 Q32.6,13.6 29.6,22.4" fill="none" stroke="#e6e6e6" stroke-width="1.2"/></g>
<path d="M1226.6,839.2 V844.7 H1221.1Z" fill="#8a8a8a"/>
<rect x="1174" y="847.2" width="55.6" height="1" fill="#303030"/>
<g transform="translate(1185.4,853.3)"><path d="M4.6,8.6 Q8,3.4 15,3.2 Q25.6,3.6 29,10 Q31.6,18 28,25.6 Q21,29.6 14.6,29.2 Q7.6,28.2 4.4,24 Q2.6,15.6 4.6,8.6Z" fill="#d6b8ea"/>
<path d="M4,16.6 Q15,17.6 30,15.6 M15,3.2 Q13.4,17 14.6,29.2 M4.6,8.6 Q14,10.2 22.6,5 L29,10 M4.4,24 Q13,22.4 22.6,24.6 L28,25.6 M22.6,5 Q24.4,15 22.6,24.6" stroke="#3a3040" stroke-width="0.9" fill="none"/></g>
<path d="M1226.6,886.8 V892.3 H1221.1Z" fill="#8a8a8a"/>
<rect x="1174" y="894.8" width="55.6" height="1" fill="#303030"/>
<g transform="translate(1185.4,901.0)"><g fill="none" stroke="#e6e6e6" stroke-width="1.4" stroke-linejoin="round"><path d="M10,11 H22 V30.6 H10"/><path d="M9.6,5 H28 L22,11 M28,5 V24.6 L22,30.6"/><path d="M4,30.6 V11 L9.6,5"/></g>
<path d="M7.6,31 V11 L13,5" fill="none" stroke="#d6b8ea" stroke-width="1.8"/><path d="M10.4,31 V11.4 L15.6,5.4" fill="none" stroke="#e6e6e6" stroke-width="1.2"/>
<path d="M0,1.6 L4,-1.6 V0.4 H8 V2.8 H4 V4.8Z" fill="#d6b8ea"/></g>
<path d="M1226.6,934.5 V940.0 H1221.1Z" fill="#8a8a8a"/>
<rect x="1174" y="942.5" width="55.6" height="1" fill="#303030"/>
<g transform="translate(1185.4,948.6)"><g transform="translate(0,1.8)"><g fill="#d6b8ea"><path d="M16,0 L19.6,5 H12.4Z"/><path d="M16,32 L19.6,27 H12.4Z"/><path d="M0,16 L5,12.4 V19.6Z"/><path d="M32,16 L27,12.4 V19.6Z"/></g>
<path d="M16,5 V8 M16,24 V27 M5,16 H8 M24,16 H27" stroke="#d6b8ea" stroke-width="1.8"/>
<rect x="9" y="9" width="14" height="14" fill="none" stroke="#e6e6e6" stroke-width="1.5"/><rect x="7.4" y="7.4" width="17.2" height="17.2" fill="none" stroke="#9a9a9a" stroke-width="0.8"/>
<path d="M11,11 L15,15 M21,11 L17,15 M11,21 L15,17 M21,21 L17,17" stroke="#d6b8ea" stroke-width="1.6"/><path d="M16,16 m-2.4,0 l2.4,-2.4 l2.4,2.4 l-2.4,2.4z" fill="#d6b8ea"/></g></g>
<path d="M1226.6,982.2 V987.7 H1221.1Z" fill="#8a8a8a"/>
<rect x="1174" y="990.2" width="55.6" height="1" fill="#303030"/>
<g transform="translate(1185.4,996.3)"><g transform="translate(16,19) scale(1.2) translate(-16,-16)"><path d="M-2,8 L15.6,4 L33,21.6 L27.6,27.6 L9,29Z" fill="#d6b8ea"/><path d="M-2,8 L15.6,4 L20,8.6 L2.6,13Z" fill="#dcc4ee"/>
<path d="M2.6,13 L20,8.6 L33,21.6 M20,8.6 L27.6,27.6" stroke="#3a3040" stroke-width="1" fill="none"/><path d="M26,-3.6 L30.4,-6.6 V-4.6 H34 V-2.4 H30.4 V-0.4Z" fill="#d6b8ea"/></g></g>
<path d="M1226.6,1029.8 V1035.3 H1221.1Z" fill="#8a8a8a"/>
<rect x="1174" y="1037.8" width="55.6" height="1" fill="#303030"/>
<g transform="translate(1185.4,1044.0)"><g transform="translate(1,1)"><g fill="none" stroke="#e6e6e6" stroke-width="1.4" stroke-linejoin="round"><path d="M7,30 H25.6 V11.6 L7,18.4"/><path d="M10,11 L16,4.6 H32 L25.6,11.6 M32,4.6 V24 L25.6,30"/><path d="M10,11 H25.6"/><path d="M0.6,20 L7,30 M0.6,20 L25.6,11.6"/></g>
<circle cx="0.6" cy="20" r="2.4" fill="#d6b8ea"/></g></g>
<path d="M1226.6,1077.5 V1083.0 H1221.1Z" fill="#8a8a8a"/>
<path d="M1957.3,116 L1956.4,80.6" stroke="#2f83f0" stroke-width="2.2"/>
<path d="M1957.3,116 L1987.7,94" stroke="#6ea51f" stroke-width="2.2"/>
<path d="M1957.3,116 L1990.6,135.6" stroke="#ee3b57" stroke-width="2.2"/>
<circle cx="1923" cy="96" r="10.3" fill="#7d3b49" stroke="#c03f58" stroke-width="1.4"/>
<circle cx="1925.9" cy="137.3" r="11.2" fill="#5f8a27" stroke="#7db21f" stroke-width="1.6"/>
<circle cx="1957" cy="151" r="10.3" fill="#3a5a8c" stroke="#3a74cc" stroke-width="1.4"/>
<circle cx="1956.4" cy="80.6" r="12" fill="#2f83f0"/>
<circle cx="1987.7" cy="94" r="11" fill="#6ea51f"/>
<circle cx="1990.6" cy="135.6" r="12" fill="#ee3b57"/>
<g font-size="13.5" font-weight="bold" fill="#1a1a1a" text-anchor="middle">
<text x="1956.4" y="85.4">Z</text><text x="1987.9" y="98.8">Y</text><text x="1990.6" y="140.4">X</text></g>
<circle cx="1996.3" cy="193.7" r="19" fill="#2b2b2b" opacity="0.92"/>
<g transform="translate(1980.3,177.7)"><path d="M12.6,22.2 L4.8,27.6" stroke="#e6e6e6" stroke-width="3.2" stroke-linecap="round"/>
<circle cx="18.3" cy="14.8" r="9.3" fill="#e6e6e6"/>
<path d="M18.3,9.6 V20 M13.1,14.8 H23.5" stroke="#2a2a2a" stroke-width="1.9"/></g>
<circle cx="1996.3" cy="237" r="19" fill="#2b2b2b" opacity="0.92"/>
<g transform="translate(1980.3,221)"><g stroke="#e6e6e6" stroke-linecap="round" fill="none">
<path d="M11.9,7.2 L13.4,19" stroke-width="3.3"/><path d="M17,5.6 V19" stroke-width="3.4"/>
<path d="M22.1,7.2 L20.9,19" stroke-width="3.3"/><path d="M26.2,13.5 L24,22" stroke-width="3"/>
<path d="M5.2,17.6 L11,23.5" stroke-width="3.6"/></g>
<path d="M9.5,18 H24.5 Q25.5,24 21.5,27.8 Q17,30 12.5,27.5 Q9,24 9.5,18Z" fill="#e6e6e6"/></g>
<circle cx="1996.3" cy="280.6" r="19" fill="#2b2b2b" opacity="0.92"/>
<g transform="translate(1980.3,264.6)"><circle cx="10.8" cy="9.6" r="4.6" fill="#e6e6e6"/><circle cx="20.6" cy="8.8" r="5.6" fill="#e6e6e6"/>
<circle cx="10.8" cy="9.6" r="1.6" fill="#2b2b2b"/><circle cx="20.6" cy="8.8" r="2" fill="#2b2b2b"/>
<rect x="7" y="14.2" width="16.5" height="11.5" rx="2" fill="#e6e6e6"/>
<path d="M24.5,19.5 L30,15.5 V25.5 L24.5,21.5Z" fill="#e6e6e6"/><path d="M3,18 h4 v5 h-4z" fill="#e6e6e6"/></g>
<circle cx="1996.3" cy="324.5" r="19" fill="#2b2b2b" opacity="0.92"/>
<g transform="translate(1980.3,308.5)"><g stroke="#e6e6e6" stroke-width="1.7" fill="none" stroke-linejoin="round">
<path d="M9.5,7.5 H22.5 L27.5,25.5 H4.5Z"/><path d="M13.8,7.5 L12.2,25.5 M18.2,7.5 L19.8,25.5"/>
<path d="M8,13 H24 M6.3,19 H25.7"/></g></g>
</svg>
</body></html>
